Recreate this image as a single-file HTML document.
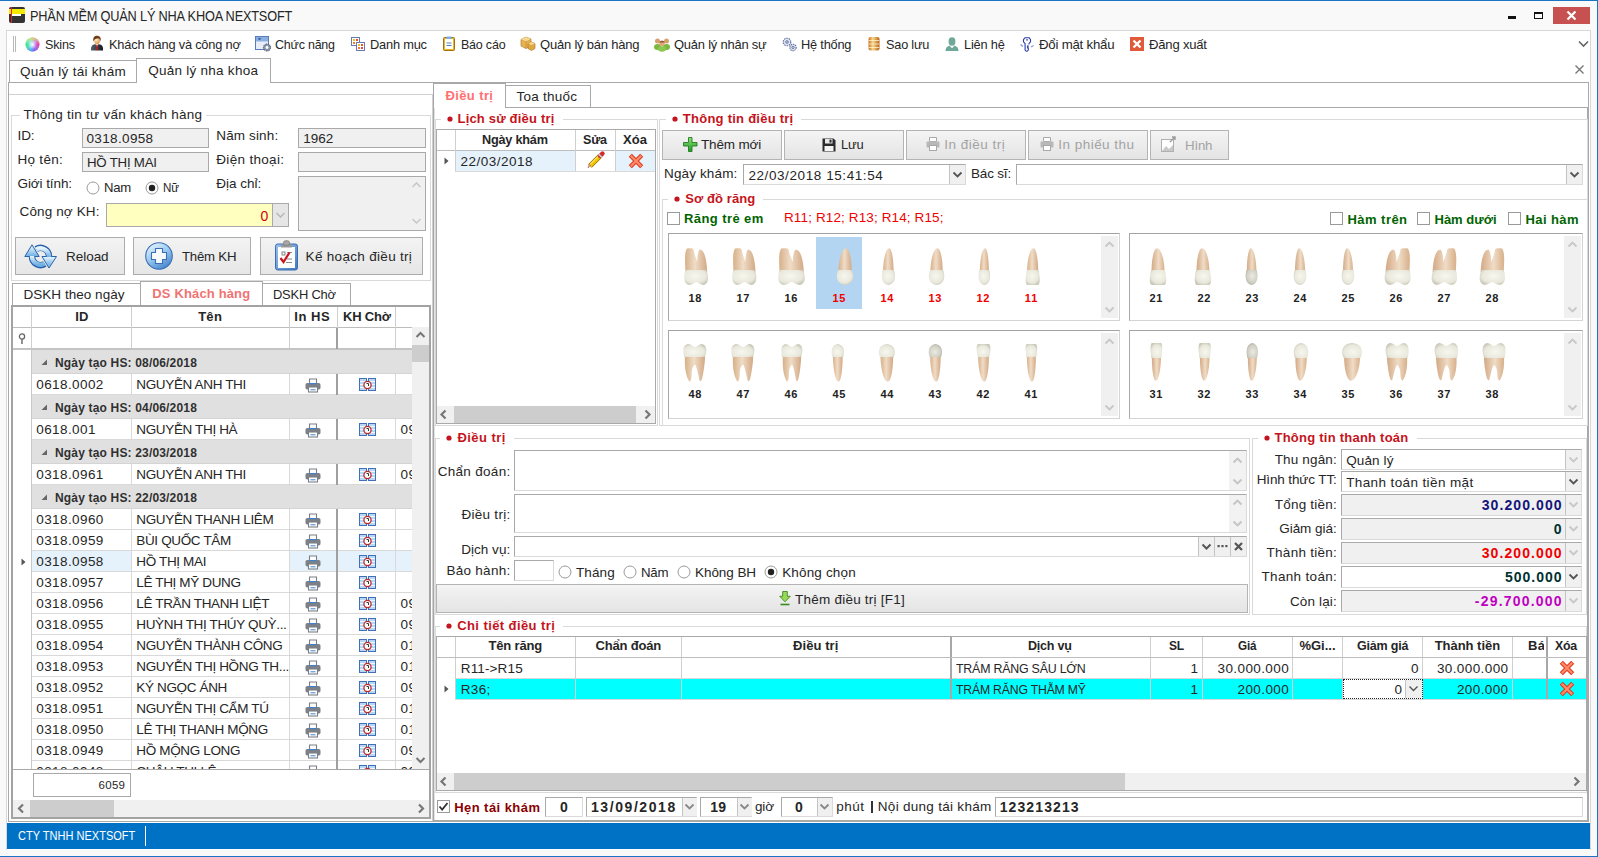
<!DOCTYPE html><html><head><meta charset="utf-8"><style>
*{margin:0;padding:0;box-sizing:border-box}
html,body{width:1598px;height:857px;overflow:hidden;background:#f9f9f9;font-family:"Liberation Sans",sans-serif;font-size:13px;color:#262626}
.a{position:absolute}
.t{position:absolute;white-space:pre}
svg{position:absolute;overflow:visible}
</style></head><body>
<div class="a" style="left:0px;top:0px;width:1598px;height:1px;background:#1c74c4"></div>
<div class="a" style="left:1597px;top:0px;width:1px;height:857px;background:#1c74c4"></div>
<div class="a" style="left:0px;top:856px;width:1598px;height:1px;background:#1c74c4"></div>
<svg style="left:9px;top:7px" width="16" height="16"><rect x="0" y="0" width="16" height="16" rx="2" fill="#333"/><rect x="0" y="2" width="16" height="5" fill="#f5ea00"/><rect x="3" y="7" width="9" height="2" fill="#fff"/><rect x="2" y="0" width="1" height="16" fill="#e22"/></svg>
<div class="t" style="left:29.50px;top:8.85px;font-size:14px;line-height:14px;color:#262626;letter-spacing:-0.200px;transform:scaleX(0.91);transform-origin:0 0;">PHẦN MỀM QUẢN LÝ NHA KHOA NEXTSOFT</div>
<div class="a" style="left:1508px;top:16px;width:8px;height:3px;background:#111"></div>
<div class="a" style="left:1534px;top:12px;width:9px;height:7px;border:1.5px solid #111;border-top-width:2px"></div>
<div class="a" style="left:1553px;top:7px;width:37px;height:17px;background:#c75050"></div>
<svg style="left:1566px;top:10px" width="11" height="11"><path d="M1.5 1.5 L9.5 9.5 M9.5 1.5 L1.5 9.5" stroke="#fff" stroke-width="2.2"/></svg>
<div class="a" style="left:6px;top:30px;width:1585px;height:820px;background:#fff;border:1px solid #d8d8d8;border-bottom:none"></div>
<div class="a" style="left:13px;top:36px;width:1px;height:16px;background:#b8b8b8"></div>
<div class="a" style="left:15px;top:36px;width:1px;height:16px;background:#b8b8b8"></div>
<div class="t" style="left:45.00px;top:37.57px;font-size:13.5px;line-height:13.5px;transform:scaleX(0.9335);transform-origin:0 0;letter-spacing:-0.220px;">Skins</div>
<div class="t" style="left:109.00px;top:37.57px;font-size:13.5px;line-height:13.5px;transform:scaleX(0.9494);transform-origin:0 0;letter-spacing:-0.220px;">Khách hàng và công nợ</div>
<div class="t" style="left:275.30px;top:37.57px;font-size:13.5px;line-height:13.5px;transform:scaleX(0.9221);transform-origin:0 0;letter-spacing:-0.220px;">Chức năng</div>
<div class="t" style="left:370.00px;top:37.57px;font-size:13.5px;line-height:13.5px;transform:scaleX(0.9501);transform-origin:0 0;letter-spacing:-0.220px;">Danh mục</div>
<div class="t" style="left:461.30px;top:37.57px;font-size:13.5px;line-height:13.5px;transform:scaleX(0.9248);transform-origin:0 0;letter-spacing:-0.220px;">Báo cáo</div>
<div class="t" style="left:540.20px;top:37.57px;font-size:13.5px;line-height:13.5px;transform:scaleX(0.9642);transform-origin:0 0;letter-spacing:-0.220px;">Quản lý bán hàng</div>
<div class="t" style="left:674.00px;top:37.57px;font-size:13.5px;line-height:13.5px;transform:scaleX(0.9578);transform-origin:0 0;letter-spacing:-0.220px;">Quản lý nhân sự</div>
<div class="t" style="left:801.30px;top:37.57px;font-size:13.5px;line-height:13.5px;transform:scaleX(0.9482);transform-origin:0 0;letter-spacing:-0.220px;">Hệ thống</div>
<div class="t" style="left:886.40px;top:37.57px;font-size:13.5px;line-height:13.5px;transform:scaleX(0.9411);transform-origin:0 0;letter-spacing:-0.220px;">Sao lưu</div>
<div class="t" style="left:964.00px;top:37.57px;font-size:13.5px;line-height:13.5px;transform:scaleX(0.9493);transform-origin:0 0;letter-spacing:-0.220px;">Liên hệ</div>
<div class="t" style="left:1039.00px;top:37.57px;font-size:13.5px;line-height:13.5px;transform:scaleX(0.9802);transform-origin:0 0;letter-spacing:-0.220px;">Đổi mật khẩu</div>
<div class="t" style="left:1149.20px;top:37.57px;font-size:13.5px;line-height:13.5px;transform:scaleX(0.9701);transform-origin:0 0;letter-spacing:-0.220px;">Đăng xuất</div>
<svg style="left:1578px;top:40px" width="11" height="8"><path d="M1 1.5 L5.5 6 L10 1.5" stroke="#666" stroke-width="1.6" fill="none"/></svg>
<div class="a" style="left:9px;top:60px;width:128px;height:23px;background:#fff;border:1px solid #a9a9a9;border-bottom:none"></div>
<div class="t" style="left:20.00px;top:64.57px;font-size:13.5px;line-height:13.5px;letter-spacing:0.294px;">Quản lý tái khám</div>
<div class="a" style="left:136px;top:58px;width:135px;height:25px;background:#fff;border:1px solid #a9a9a9;border-bottom:none"></div>
<div class="t" style="left:148.20px;top:63.57px;font-size:13.5px;line-height:13.5px;letter-spacing:0.261px;">Quản lý nha khoa</div>
<svg style="left:1575px;top:65px" width="9" height="9"><path d="M0.5 0.5 L8.5 8.5 M8.5 0.5 L0.5 8.5" stroke="#777" stroke-width="1.4"/></svg>
<div class="a" style="left:8px;top:82px;width:1581px;height:740px;background:#fff;border:1px solid #a9a9a9"></div>
<div class="a" style="left:137px;top:82px;width:133px;height:1px;background:#fff"></div>
<div class="a" style="left:7px;top:823px;width:1583px;height:26px;background:#0072c6"></div>
<div class="t" style="left:18.00px;top:829.84px;font-size:12px;line-height:12px;color:#fff;transform:scaleX(0.92);transform-origin:0 0;">CTY TNHH NEXTSOFT</div>
<div class="a" style="left:145px;top:826px;width:1px;height:20px;background:#fff"></div>
<div class="a" style="left:9px;top:94px;width:424px;height:727px;border-top:1px solid #d0d0d0;border-right:1px solid #d0d0d0"></div>
<div class="a" style="left:433px;top:82px;width:1px;height:740px;background:#a6a6a6"></div>
<div class="a" style="left:11px;top:115px;width:420px;height:166px;border:1px solid #d9d9d9"></div>
<div class="a" style="left:20px;top:110px;width:186px;height:10px;background:#fff"></div>
<div class="t" style="left:23.40px;top:107.57px;font-size:13.5px;line-height:13.5px;letter-spacing:0.263px;">Thông tin tư vấn khách hàng</div>
<div class="a" style="left:82px;top:128px;width:127px;height:20px;background:#f0f0f0;border:1px solid #a9a9a9"></div>
<div class="a" style="left:82px;top:152px;width:127px;height:20px;background:#f0f0f0;border:1px solid #a9a9a9"></div>
<div class="a" style="left:298px;top:128px;width:128px;height:20px;background:#f0f0f0;border:1px solid #a9a9a9"></div>
<div class="a" style="left:298px;top:152px;width:128px;height:20px;background:#f0f0f0;border:1px solid #a9a9a9"></div>
<div class="a" style="left:298px;top:176px;width:128px;height:55px;background:#f0f0f0;border:1px solid #a9a9a9"></div>
<div class="t" style="left:17.50px;top:128.57px;font-size:13.5px;line-height:13.5px;letter-spacing:-0.089px;">ID:</div>
<div class="t" style="left:86.50px;top:131.57px;font-size:13.5px;line-height:13.5px;letter-spacing:0.352px;">0318.0958</div>
<div class="t" style="left:17.50px;top:152.97px;font-size:13.5px;line-height:13.5px;letter-spacing:0.281px;">Họ tên:</div>
<div class="t" style="left:86.50px;top:155.57px;font-size:13.5px;line-height:13.5px;transform:scaleX(0.9820);transform-origin:0 0;letter-spacing:-0.220px;">HỒ THỊ MAI</div>
<div class="t" style="left:17.50px;top:177.07px;font-size:13.5px;line-height:13.5px;letter-spacing:-0.087px;">Giới tính:</div>
<div class="t" style="left:216.30px;top:128.77px;font-size:13.5px;line-height:13.5px;letter-spacing:0.135px;">Năm sinh:</div>
<div class="t" style="left:303.30px;top:131.97px;font-size:13.5px;line-height:13.5px;letter-spacing:-0.012px;">1962</div>
<div class="t" style="left:216.30px;top:152.97px;font-size:13.5px;line-height:13.5px;letter-spacing:0.314px;">Điện thoại:</div>
<div class="t" style="left:216.30px;top:176.97px;font-size:13.5px;line-height:13.5px;letter-spacing:-0.002px;">Địa chỉ:</div>
<svg style="left:412px;top:182px" width="9" height="6"><path d="M0.5 5 L4.5 1 L8.5 5" stroke="#c4c4c4" stroke-width="1.3" fill="none"/></svg>
<svg style="left:412px;top:218px" width="9" height="6"><path d="M0.5 1 L4.5 5 L8.5 1" stroke="#c4c4c4" stroke-width="1.3" fill="none"/></svg>
<svg style="left:86px;top:180.5px" width="14" height="14"><circle cx="7" cy="7" r="6" fill="#fff" stroke="#9a9a9a" stroke-width="1"/></svg>
<div class="t" style="left:104.30px;top:180.97px;font-size:13.5px;line-height:13.5px;transform:scaleX(0.9724);transform-origin:0 0;letter-spacing:-0.220px;">Nam</div>
<svg style="left:145px;top:180.5px" width="14" height="14"><circle cx="7" cy="7" r="6" fill="#fff" stroke="#9a9a9a" stroke-width="1"/><circle cx="7" cy="7" r="3.2" fill="#222"/></svg>
<div class="t" style="left:163.30px;top:180.97px;font-size:13.5px;line-height:13.5px;transform:scaleX(0.8613);transform-origin:0 0;letter-spacing:-0.220px;">Nữ</div>
<div class="t" style="left:19.60px;top:204.57px;font-size:13.5px;line-height:13.5px;letter-spacing:0.124px;">Công nợ KH:</div>
<div class="a" style="left:106px;top:203px;width:167px;height:24px;background:#ffffc0;border:1px solid #a9a9a9;border-right:none"></div>
<div class="a" style="left:272px;top:203px;width:17px;height:24px;background:#e6e6e6;border:1px solid #a9a9a9"></div>
<svg style="left:276px;top:212px" width="9" height="6"><path d="M0.5 1 L4.5 5 L8.5 1" stroke="#b5b5b5" stroke-width="1.3" fill="none"/></svg>
<div class="t" style="left:260.60px;top:208.65px;font-size:14px;line-height:14px;color:#d00000;">0</div>
<div class="a" style="left:15px;top:237px;width:110px;height:38px;background:linear-gradient(#f3f3f3,#e6e6e6);border:1px solid #acacac"></div>
<div class="a" style="left:133px;top:237px;width:118px;height:38px;background:linear-gradient(#f3f3f3,#e6e6e6);border:1px solid #acacac"></div>
<div class="a" style="left:260px;top:237px;width:163px;height:38px;background:linear-gradient(#f3f3f3,#e6e6e6);border:1px solid #acacac"></div>
<div class="t" style="left:66.00px;top:249.57px;font-size:13.5px;line-height:13.5px;letter-spacing:-0.030px;">Reload</div>
<div class="t" style="left:182.30px;top:249.57px;font-size:13.5px;line-height:13.5px;transform:scaleX(0.9785);transform-origin:0 0;letter-spacing:-0.220px;">Thêm KH</div>
<div class="t" style="left:305.60px;top:249.57px;font-size:13.5px;line-height:13.5px;letter-spacing:0.310px;">Kế hoạch điều trị</div>
<svg style="left:24px;top:244px" width="34" height="25" viewBox="0 0 34 25">
<defs><linearGradient id="rl" x1="0" y1="0" x2="0" y2="1"><stop offset="0" stop-color="#e4f4fd"/><stop offset="1" stop-color="#6fb0e4"/></linearGradient></defs>
<path d="M8 12.5 A8.5 8.5 0 0 0 20.8 19.9" stroke="#2c62aa" stroke-width="6.4" fill="none"/>
<path d="M12.2 5.1 A8.5 8.5 0 0 1 25 12.5" stroke="#2c62aa" stroke-width="6.4" fill="none"/>
<path d="M0.8 12.5 L8 0.8 L15.2 12.5 Z" fill="url(#rl)" stroke="#2c62aa" stroke-width="1"/>
<path d="M18 12.5 L25 24 L32.5 12.5 Z" fill="url(#rl)" stroke="#2c62aa" stroke-width="1"/>
<path d="M8 12 A8.5 8.5 0 0 0 20.6 19.6" stroke="url(#rl)" stroke-width="4.4" fill="none"/>
<path d="M12.4 5.4 A8.5 8.5 0 0 1 25 13" stroke="url(#rl)" stroke-width="4.4" fill="none"/>
<path d="M2.6 12 L8 3 L13.4 12 Z" fill="url(#rl)"/><path d="M19.8 13 L25 21.5 L30.7 13 Z" fill="url(#rl)"/>
</svg>
<svg style="left:145px;top:242px" width="28" height="28" viewBox="0 0 28 28">
<defs><linearGradient id="gb" x1="0.2" y1="0" x2="0.8" y2="1"><stop offset="0" stop-color="#eaf5fe"/><stop offset="0.45" stop-color="#9ccaf0"/><stop offset="1" stop-color="#3f7ec8"/></linearGradient></defs>
<circle cx="14" cy="14" r="13.3" fill="url(#gb)" stroke="#3a6fb6" stroke-width="1.1"/>
<path d="M10.5 6.5 h7 v4 h4 v7 h-4 v4 h-7 v-4 h-4 v-7 h4 z" fill="#f6fafe" stroke="#3a6fb6" stroke-width="1.1" stroke-linejoin="round"/>
</svg>
<svg style="left:275px;top:240px" width="23" height="31" viewBox="0 0 23 31">
<defs><linearGradient id="cb" x1="0" y1="0" x2="1" y2="1"><stop offset="0" stop-color="#9cc4ee"/><stop offset="1" stop-color="#3f78c0"/></linearGradient></defs>
<rect x="0.5" y="4" width="22" height="26" rx="2.2" fill="url(#cb)" stroke="#3b6db0" stroke-width="1"/>
<rect x="3" y="7" width="17" height="21" fill="#fff"/>
<path d="M6 4.5 h11 v3 h-11 z" fill="#9a9a9a"/><rect x="8.5" y="0.8" width="6" height="4.5" rx="2" fill="#a8a8a8" stroke="#7a7a7a" stroke-width="0.8"/>
<rect x="7" y="12" width="3" height="3" fill="none" stroke="#777" stroke-width="0.9"/>
<path d="M12 12.5 h5 M12 19 h5 M11 22.5 h6" stroke="#888" stroke-width="1"/>
<path d="M5.5 18 L8.5 22 L14.5 12.5" stroke="#c8141e" stroke-width="2.2" fill="none"/>
</svg>
<div class="a" style="left:12px;top:283px;width:129px;height:23px;background:#fff;border:1px solid #a9a9a9;border-bottom:none"></div>
<div class="a" style="left:262px;top:283px;width:89px;height:23px;background:#fff;border:1px solid #a9a9a9;border-bottom:none"></div>
<div class="a" style="left:140px;top:281px;width:123px;height:25px;background:#fff;border:1px solid #a9a9a9;border-bottom:none"></div>
<div class="t" style="left:23.50px;top:287.57px;font-size:13.5px;line-height:13.5px;letter-spacing:0.031px;">DSKH theo ngày</div>
<div class="t" style="left:152.30px;top:286.50px;font-size:13px;line-height:13px;font-weight:700;color:#f07373;letter-spacing:0.148px;">DS Khách hàng</div>
<div class="t" style="left:272.60px;top:287.57px;font-size:13.5px;line-height:13.5px;transform:scaleX(0.9569);transform-origin:0 0;letter-spacing:-0.220px;">DSKH Chờ</div>
<div class="a" style="left:11px;top:305px;width:420px;height:514px;border:2px solid #a3a3a3;background:#fff"></div>
<div class="a" style="left:13px;top:307px;width:399px;height:21px;background:#fff;border-bottom:1px solid #bdbdbd"></div>
<div class="a" style="left:412px;top:307px;width:17px;height:21px;background:#fff;border-bottom:1px solid #bdbdbd"></div>
<div class="a" style="left:31px;top:307px;width:1px;height:42px;background:#cfcfcf"></div>
<div class="a" style="left:131px;top:307px;width:1px;height:42px;background:#cfcfcf"></div>
<div class="a" style="left:289px;top:307px;width:1px;height:42px;background:#cfcfcf"></div>
<div class="a" style="left:337px;top:307px;width:1px;height:42px;background:#cfcfcf"></div>
<div class="a" style="left:395px;top:307px;width:1px;height:42px;background:#cfcfcf"></div>
<div class="t" style="left:75.30px;top:309.60px;font-size:13px;line-height:13px;font-weight:700;letter-spacing:0.200px;">ID</div>
<div class="t" style="left:198.15px;top:309.60px;font-size:13px;line-height:13px;font-weight:700;letter-spacing:0.292px;">Tên</div>
<div class="t" style="left:294.28px;top:309.60px;font-size:13px;line-height:13px;font-weight:700;letter-spacing:0.553px;">In HS</div>
<div class="t" style="left:343.04px;top:309.60px;font-size:13px;line-height:13px;font-weight:700;letter-spacing:-0.211px;">KH Chờ</div>
<div class="a" style="left:13px;top:348px;width:399px;height:2px;background:#c4c4c4"></div>
<svg style="left:18px;top:333px" width="8" height="12"><circle cx="4" cy="3.5" r="2.6" fill="none" stroke="#666" stroke-width="1.3"/><path d="M4 6 V11" stroke="#666" stroke-width="1.4"/></svg>
<div class="a" style="left:412px;top:327px;width:17px;height:442px;background:#f0f0f0"></div>
<div class="a" style="left:412px;top:345px;width:17px;height:17px;background:#cdcdcd"></div>
<svg style="left:416px;top:332px" width="9" height="6"><path d="M0.5 5 L4.5 1 L8.5 5" stroke="#777" stroke-width="2" fill="none"/></svg>
<svg style="left:416px;top:757px" width="9" height="6"><path d="M0.5 1 L4.5 5 L8.5 1" stroke="#777" stroke-width="2" fill="none"/></svg>
<div class="a" style="left:14px;top:350px;width:398px;height:419px;overflow:hidden">
<div class="a" style="left:17px;top:0px;width:381px;height:24px;background:#e0e0e0;border-bottom:1px solid #d4d4d4"></div>
<svg style="left:27px;top:9px" width="7" height="7"><path d="M6 0.5 V6 H0.5 Z" fill="#666"/></svg>
<div class="t" style="left:41.00px;top:6.54px;font-size:12px;line-height:12px;font-weight:700;color:#303030;letter-spacing:0.171px;">Ngày tạo HS: 08/06/2018</div>
<div class="a" style="left:17px;top:24px;width:381px;height:21px;background:#fff;border-bottom:1px solid #d9d9d9"></div>
<div class="a" style="left:117px;top:24px;width:1px;height:21px;background:#d9d9d9"></div>
<div class="a" style="left:275px;top:24px;width:1px;height:21px;background:#d9d9d9"></div>
<div class="a" style="left:381px;top:24px;width:1px;height:21px;background:#d9d9d9"></div>
<div class="a" style="left:322px;top:24px;width:2px;height:21px;background:#a0a0a0"></div>
<div class="t" style="left:22.30px;top:28.27px;font-size:13.5px;line-height:13.5px;letter-spacing:0.400px;">0618.0002</div>
<div class="t" style="left:122.30px;top:28.27px;font-size:13.5px;line-height:13.5px;letter-spacing:-0.350px;">NGUYỄN ANH THI</div>
<svg style="left:291px;top:28px" width="16" height="14"><path d="M4.5 1 h7 v4.5 h-7 z" fill="#fff" stroke="#7a7f86" stroke-width="1.1"/><rect x="0.5" y="5" width="15" height="6.5" rx="1.8" fill="#7d8186"/><rect x="4.5" y="5" width="7" height="1.2" fill="#3f7fd0"/><rect x="3.5" y="9" width="9" height="5" fill="#fff" stroke="#7a7f86" stroke-width="1.1"/><path d="M5.5 11.8 h5" stroke="#3f7fd0" stroke-width="1"/></svg>
<svg style="left:345px;top:28px" width="17" height="13"><rect x="0.5" y="0.5" width="7" height="12" fill="#b9d6f2" stroke="#3f70b8"/><rect x="9.5" y="0.5" width="7" height="12" fill="#b9d6f2" stroke="#3f70b8"/><path d="M1 3.5 h6 M1 6.5 h6 M1 9.5 h6 M10 3.5 h6 M10 6.5 h6 M10 9.5 h6" stroke="#fff" stroke-width="0.8"/><circle cx="8.5" cy="7" r="3.6" fill="#fff" stroke="#c02828" stroke-width="1.3"/><path d="M7.5 5.5 h2 v2.5" stroke="#333" stroke-width="1" fill="none"/></svg>
<div class="a" style="left:17px;top:45px;width:381px;height:24px;background:#e0e0e0;border-bottom:1px solid #d4d4d4"></div>
<svg style="left:27px;top:54px" width="7" height="7"><path d="M6 0.5 V6 H0.5 Z" fill="#666"/></svg>
<div class="t" style="left:41.00px;top:51.54px;font-size:12px;line-height:12px;font-weight:700;color:#303030;letter-spacing:0.171px;">Ngày tạo HS: 04/06/2018</div>
<div class="a" style="left:17px;top:69px;width:381px;height:21px;background:#fff;border-bottom:1px solid #d9d9d9"></div>
<div class="a" style="left:117px;top:69px;width:1px;height:21px;background:#d9d9d9"></div>
<div class="a" style="left:275px;top:69px;width:1px;height:21px;background:#d9d9d9"></div>
<div class="a" style="left:381px;top:69px;width:1px;height:21px;background:#d9d9d9"></div>
<div class="a" style="left:322px;top:69px;width:2px;height:21px;background:#a0a0a0"></div>
<div class="t" style="left:22.30px;top:73.27px;font-size:13.5px;line-height:13.5px;letter-spacing:0.400px;">0618.001</div>
<div class="t" style="left:122.30px;top:73.27px;font-size:13.5px;line-height:13.5px;letter-spacing:-0.350px;">NGUYỄN THỊ HÀ</div>
<svg style="left:291px;top:73px" width="16" height="14"><path d="M4.5 1 h7 v4.5 h-7 z" fill="#fff" stroke="#7a7f86" stroke-width="1.1"/><rect x="0.5" y="5" width="15" height="6.5" rx="1.8" fill="#7d8186"/><rect x="4.5" y="5" width="7" height="1.2" fill="#3f7fd0"/><rect x="3.5" y="9" width="9" height="5" fill="#fff" stroke="#7a7f86" stroke-width="1.1"/><path d="M5.5 11.8 h5" stroke="#3f7fd0" stroke-width="1"/></svg>
<svg style="left:345px;top:73px" width="17" height="13"><rect x="0.5" y="0.5" width="7" height="12" fill="#b9d6f2" stroke="#3f70b8"/><rect x="9.5" y="0.5" width="7" height="12" fill="#b9d6f2" stroke="#3f70b8"/><path d="M1 3.5 h6 M1 6.5 h6 M1 9.5 h6 M10 3.5 h6 M10 6.5 h6 M10 9.5 h6" stroke="#fff" stroke-width="0.8"/><circle cx="8.5" cy="7" r="3.6" fill="#fff" stroke="#c02828" stroke-width="1.3"/><path d="M7.5 5.5 h2 v2.5" stroke="#333" stroke-width="1" fill="none"/></svg>
<div class="t" style="left:386.60px;top:73.27px;font-size:13.5px;line-height:13.5px;letter-spacing:0.400px;">09</div>
<div class="a" style="left:17px;top:90px;width:381px;height:24px;background:#e0e0e0;border-bottom:1px solid #d4d4d4"></div>
<svg style="left:27px;top:99px" width="7" height="7"><path d="M6 0.5 V6 H0.5 Z" fill="#666"/></svg>
<div class="t" style="left:41.00px;top:96.54px;font-size:12px;line-height:12px;font-weight:700;color:#303030;letter-spacing:0.171px;">Ngày tạo HS: 23/03/2018</div>
<div class="a" style="left:17px;top:114px;width:381px;height:21px;background:#fff;border-bottom:1px solid #d9d9d9"></div>
<div class="a" style="left:117px;top:114px;width:1px;height:21px;background:#d9d9d9"></div>
<div class="a" style="left:275px;top:114px;width:1px;height:21px;background:#d9d9d9"></div>
<div class="a" style="left:381px;top:114px;width:1px;height:21px;background:#d9d9d9"></div>
<div class="a" style="left:322px;top:114px;width:2px;height:21px;background:#a0a0a0"></div>
<div class="t" style="left:22.30px;top:118.27px;font-size:13.5px;line-height:13.5px;letter-spacing:0.400px;">0318.0961</div>
<div class="t" style="left:122.30px;top:118.27px;font-size:13.5px;line-height:13.5px;letter-spacing:-0.350px;">NGUYỄN ANH THI</div>
<svg style="left:291px;top:118px" width="16" height="14"><path d="M4.5 1 h7 v4.5 h-7 z" fill="#fff" stroke="#7a7f86" stroke-width="1.1"/><rect x="0.5" y="5" width="15" height="6.5" rx="1.8" fill="#7d8186"/><rect x="4.5" y="5" width="7" height="1.2" fill="#3f7fd0"/><rect x="3.5" y="9" width="9" height="5" fill="#fff" stroke="#7a7f86" stroke-width="1.1"/><path d="M5.5 11.8 h5" stroke="#3f7fd0" stroke-width="1"/></svg>
<svg style="left:345px;top:118px" width="17" height="13"><rect x="0.5" y="0.5" width="7" height="12" fill="#b9d6f2" stroke="#3f70b8"/><rect x="9.5" y="0.5" width="7" height="12" fill="#b9d6f2" stroke="#3f70b8"/><path d="M1 3.5 h6 M1 6.5 h6 M1 9.5 h6 M10 3.5 h6 M10 6.5 h6 M10 9.5 h6" stroke="#fff" stroke-width="0.8"/><circle cx="8.5" cy="7" r="3.6" fill="#fff" stroke="#c02828" stroke-width="1.3"/><path d="M7.5 5.5 h2 v2.5" stroke="#333" stroke-width="1" fill="none"/></svg>
<div class="t" style="left:386.60px;top:118.27px;font-size:13.5px;line-height:13.5px;letter-spacing:0.400px;">09</div>
<div class="a" style="left:17px;top:135px;width:381px;height:24px;background:#e0e0e0;border-bottom:1px solid #d4d4d4"></div>
<svg style="left:27px;top:144px" width="7" height="7"><path d="M6 0.5 V6 H0.5 Z" fill="#666"/></svg>
<div class="t" style="left:41.00px;top:141.54px;font-size:12px;line-height:12px;font-weight:700;color:#303030;letter-spacing:0.171px;">Ngày tạo HS: 22/03/2018</div>
<div class="a" style="left:17px;top:159px;width:381px;height:21px;background:#fff;border-bottom:1px solid #d9d9d9"></div>
<div class="a" style="left:117px;top:159px;width:1px;height:21px;background:#d9d9d9"></div>
<div class="a" style="left:275px;top:159px;width:1px;height:21px;background:#d9d9d9"></div>
<div class="a" style="left:381px;top:159px;width:1px;height:21px;background:#d9d9d9"></div>
<div class="a" style="left:322px;top:159px;width:2px;height:21px;background:#a0a0a0"></div>
<div class="t" style="left:22.30px;top:163.27px;font-size:13.5px;line-height:13.5px;letter-spacing:0.400px;">0318.0960</div>
<div class="t" style="left:122.30px;top:163.27px;font-size:13.5px;line-height:13.5px;letter-spacing:-0.350px;">NGUYỄN THANH LIÊM</div>
<svg style="left:291px;top:163px" width="16" height="14"><path d="M4.5 1 h7 v4.5 h-7 z" fill="#fff" stroke="#7a7f86" stroke-width="1.1"/><rect x="0.5" y="5" width="15" height="6.5" rx="1.8" fill="#7d8186"/><rect x="4.5" y="5" width="7" height="1.2" fill="#3f7fd0"/><rect x="3.5" y="9" width="9" height="5" fill="#fff" stroke="#7a7f86" stroke-width="1.1"/><path d="M5.5 11.8 h5" stroke="#3f7fd0" stroke-width="1"/></svg>
<svg style="left:345px;top:163px" width="17" height="13"><rect x="0.5" y="0.5" width="7" height="12" fill="#b9d6f2" stroke="#3f70b8"/><rect x="9.5" y="0.5" width="7" height="12" fill="#b9d6f2" stroke="#3f70b8"/><path d="M1 3.5 h6 M1 6.5 h6 M1 9.5 h6 M10 3.5 h6 M10 6.5 h6 M10 9.5 h6" stroke="#fff" stroke-width="0.8"/><circle cx="8.5" cy="7" r="3.6" fill="#fff" stroke="#c02828" stroke-width="1.3"/><path d="M7.5 5.5 h2 v2.5" stroke="#333" stroke-width="1" fill="none"/></svg>
<div class="a" style="left:17px;top:180px;width:381px;height:21px;background:#fff;border-bottom:1px solid #d9d9d9"></div>
<div class="a" style="left:117px;top:180px;width:1px;height:21px;background:#d9d9d9"></div>
<div class="a" style="left:275px;top:180px;width:1px;height:21px;background:#d9d9d9"></div>
<div class="a" style="left:381px;top:180px;width:1px;height:21px;background:#d9d9d9"></div>
<div class="a" style="left:322px;top:180px;width:2px;height:21px;background:#a0a0a0"></div>
<div class="t" style="left:22.30px;top:184.27px;font-size:13.5px;line-height:13.5px;letter-spacing:0.400px;">0318.0959</div>
<div class="t" style="left:122.30px;top:184.27px;font-size:13.5px;line-height:13.5px;letter-spacing:-0.350px;">BÙI QUỐC TÂM</div>
<svg style="left:291px;top:184px" width="16" height="14"><path d="M4.5 1 h7 v4.5 h-7 z" fill="#fff" stroke="#7a7f86" stroke-width="1.1"/><rect x="0.5" y="5" width="15" height="6.5" rx="1.8" fill="#7d8186"/><rect x="4.5" y="5" width="7" height="1.2" fill="#3f7fd0"/><rect x="3.5" y="9" width="9" height="5" fill="#fff" stroke="#7a7f86" stroke-width="1.1"/><path d="M5.5 11.8 h5" stroke="#3f7fd0" stroke-width="1"/></svg>
<svg style="left:345px;top:184px" width="17" height="13"><rect x="0.5" y="0.5" width="7" height="12" fill="#b9d6f2" stroke="#3f70b8"/><rect x="9.5" y="0.5" width="7" height="12" fill="#b9d6f2" stroke="#3f70b8"/><path d="M1 3.5 h6 M1 6.5 h6 M1 9.5 h6 M10 3.5 h6 M10 6.5 h6 M10 9.5 h6" stroke="#fff" stroke-width="0.8"/><circle cx="8.5" cy="7" r="3.6" fill="#fff" stroke="#c02828" stroke-width="1.3"/><path d="M7.5 5.5 h2 v2.5" stroke="#333" stroke-width="1" fill="none"/></svg>
<div class="a" style="left:17px;top:201px;width:381px;height:21px;background:#e5f1fb;border-bottom:1px solid #d9d9d9"></div>
<div class="a" style="left:118px;top:201px;width:157px;height:20px;background:#fff"></div>
<div class="a" style="left:117px;top:201px;width:1px;height:21px;background:#d9d9d9"></div>
<div class="a" style="left:275px;top:201px;width:1px;height:21px;background:#d9d9d9"></div>
<div class="a" style="left:381px;top:201px;width:1px;height:21px;background:#d9d9d9"></div>
<div class="a" style="left:322px;top:201px;width:2px;height:21px;background:#a0a0a0"></div>
<div class="t" style="left:22.30px;top:205.27px;font-size:13.5px;line-height:13.5px;letter-spacing:0.400px;">0318.0958</div>
<div class="t" style="left:122.30px;top:205.27px;font-size:13.5px;line-height:13.5px;letter-spacing:-0.350px;">HỒ THỊ MAI</div>
<svg style="left:291px;top:205px" width="16" height="14"><path d="M4.5 1 h7 v4.5 h-7 z" fill="#fff" stroke="#7a7f86" stroke-width="1.1"/><rect x="0.5" y="5" width="15" height="6.5" rx="1.8" fill="#7d8186"/><rect x="4.5" y="5" width="7" height="1.2" fill="#3f7fd0"/><rect x="3.5" y="9" width="9" height="5" fill="#fff" stroke="#7a7f86" stroke-width="1.1"/><path d="M5.5 11.8 h5" stroke="#3f7fd0" stroke-width="1"/></svg>
<svg style="left:345px;top:205px" width="17" height="13"><rect x="0.5" y="0.5" width="7" height="12" fill="#b9d6f2" stroke="#3f70b8"/><rect x="9.5" y="0.5" width="7" height="12" fill="#b9d6f2" stroke="#3f70b8"/><path d="M1 3.5 h6 M1 6.5 h6 M1 9.5 h6 M10 3.5 h6 M10 6.5 h6 M10 9.5 h6" stroke="#fff" stroke-width="0.8"/><circle cx="8.5" cy="7" r="3.6" fill="#fff" stroke="#c02828" stroke-width="1.3"/><path d="M7.5 5.5 h2 v2.5" stroke="#333" stroke-width="1" fill="none"/></svg>
<svg style="left:7px;top:208px" width="5" height="8"><path d="M0.5 0.5 L4.5 4 L0.5 7.5 Z" fill="#555"/></svg>
<div class="a" style="left:17px;top:222px;width:381px;height:21px;background:#fff;border-bottom:1px solid #d9d9d9"></div>
<div class="a" style="left:117px;top:222px;width:1px;height:21px;background:#d9d9d9"></div>
<div class="a" style="left:275px;top:222px;width:1px;height:21px;background:#d9d9d9"></div>
<div class="a" style="left:381px;top:222px;width:1px;height:21px;background:#d9d9d9"></div>
<div class="a" style="left:322px;top:222px;width:2px;height:21px;background:#a0a0a0"></div>
<div class="t" style="left:22.30px;top:226.27px;font-size:13.5px;line-height:13.5px;letter-spacing:0.400px;">0318.0957</div>
<div class="t" style="left:122.30px;top:226.27px;font-size:13.5px;line-height:13.5px;letter-spacing:-0.350px;">LÊ THỊ MỸ DUNG</div>
<svg style="left:291px;top:226px" width="16" height="14"><path d="M4.5 1 h7 v4.5 h-7 z" fill="#fff" stroke="#7a7f86" stroke-width="1.1"/><rect x="0.5" y="5" width="15" height="6.5" rx="1.8" fill="#7d8186"/><rect x="4.5" y="5" width="7" height="1.2" fill="#3f7fd0"/><rect x="3.5" y="9" width="9" height="5" fill="#fff" stroke="#7a7f86" stroke-width="1.1"/><path d="M5.5 11.8 h5" stroke="#3f7fd0" stroke-width="1"/></svg>
<svg style="left:345px;top:226px" width="17" height="13"><rect x="0.5" y="0.5" width="7" height="12" fill="#b9d6f2" stroke="#3f70b8"/><rect x="9.5" y="0.5" width="7" height="12" fill="#b9d6f2" stroke="#3f70b8"/><path d="M1 3.5 h6 M1 6.5 h6 M1 9.5 h6 M10 3.5 h6 M10 6.5 h6 M10 9.5 h6" stroke="#fff" stroke-width="0.8"/><circle cx="8.5" cy="7" r="3.6" fill="#fff" stroke="#c02828" stroke-width="1.3"/><path d="M7.5 5.5 h2 v2.5" stroke="#333" stroke-width="1" fill="none"/></svg>
<div class="a" style="left:17px;top:243px;width:381px;height:21px;background:#fff;border-bottom:1px solid #d9d9d9"></div>
<div class="a" style="left:117px;top:243px;width:1px;height:21px;background:#d9d9d9"></div>
<div class="a" style="left:275px;top:243px;width:1px;height:21px;background:#d9d9d9"></div>
<div class="a" style="left:381px;top:243px;width:1px;height:21px;background:#d9d9d9"></div>
<div class="a" style="left:322px;top:243px;width:2px;height:21px;background:#a0a0a0"></div>
<div class="t" style="left:22.30px;top:247.27px;font-size:13.5px;line-height:13.5px;letter-spacing:0.400px;">0318.0956</div>
<div class="t" style="left:122.30px;top:247.27px;font-size:13.5px;line-height:13.5px;letter-spacing:-0.350px;">LÊ TRẦN THANH LIỆT</div>
<svg style="left:291px;top:247px" width="16" height="14"><path d="M4.5 1 h7 v4.5 h-7 z" fill="#fff" stroke="#7a7f86" stroke-width="1.1"/><rect x="0.5" y="5" width="15" height="6.5" rx="1.8" fill="#7d8186"/><rect x="4.5" y="5" width="7" height="1.2" fill="#3f7fd0"/><rect x="3.5" y="9" width="9" height="5" fill="#fff" stroke="#7a7f86" stroke-width="1.1"/><path d="M5.5 11.8 h5" stroke="#3f7fd0" stroke-width="1"/></svg>
<svg style="left:345px;top:247px" width="17" height="13"><rect x="0.5" y="0.5" width="7" height="12" fill="#b9d6f2" stroke="#3f70b8"/><rect x="9.5" y="0.5" width="7" height="12" fill="#b9d6f2" stroke="#3f70b8"/><path d="M1 3.5 h6 M1 6.5 h6 M1 9.5 h6 M10 3.5 h6 M10 6.5 h6 M10 9.5 h6" stroke="#fff" stroke-width="0.8"/><circle cx="8.5" cy="7" r="3.6" fill="#fff" stroke="#c02828" stroke-width="1.3"/><path d="M7.5 5.5 h2 v2.5" stroke="#333" stroke-width="1" fill="none"/></svg>
<div class="t" style="left:386.60px;top:247.27px;font-size:13.5px;line-height:13.5px;letter-spacing:0.400px;">09</div>
<div class="a" style="left:17px;top:264px;width:381px;height:21px;background:#fff;border-bottom:1px solid #d9d9d9"></div>
<div class="a" style="left:117px;top:264px;width:1px;height:21px;background:#d9d9d9"></div>
<div class="a" style="left:275px;top:264px;width:1px;height:21px;background:#d9d9d9"></div>
<div class="a" style="left:381px;top:264px;width:1px;height:21px;background:#d9d9d9"></div>
<div class="a" style="left:322px;top:264px;width:2px;height:21px;background:#a0a0a0"></div>
<div class="t" style="left:22.30px;top:268.27px;font-size:13.5px;line-height:13.5px;letter-spacing:0.400px;">0318.0955</div>
<div class="t" style="left:122.30px;top:268.27px;font-size:13.5px;line-height:13.5px;letter-spacing:-0.350px;">HUỲNH THỊ THÚY QUỲ...</div>
<svg style="left:291px;top:268px" width="16" height="14"><path d="M4.5 1 h7 v4.5 h-7 z" fill="#fff" stroke="#7a7f86" stroke-width="1.1"/><rect x="0.5" y="5" width="15" height="6.5" rx="1.8" fill="#7d8186"/><rect x="4.5" y="5" width="7" height="1.2" fill="#3f7fd0"/><rect x="3.5" y="9" width="9" height="5" fill="#fff" stroke="#7a7f86" stroke-width="1.1"/><path d="M5.5 11.8 h5" stroke="#3f7fd0" stroke-width="1"/></svg>
<svg style="left:345px;top:268px" width="17" height="13"><rect x="0.5" y="0.5" width="7" height="12" fill="#b9d6f2" stroke="#3f70b8"/><rect x="9.5" y="0.5" width="7" height="12" fill="#b9d6f2" stroke="#3f70b8"/><path d="M1 3.5 h6 M1 6.5 h6 M1 9.5 h6 M10 3.5 h6 M10 6.5 h6 M10 9.5 h6" stroke="#fff" stroke-width="0.8"/><circle cx="8.5" cy="7" r="3.6" fill="#fff" stroke="#c02828" stroke-width="1.3"/><path d="M7.5 5.5 h2 v2.5" stroke="#333" stroke-width="1" fill="none"/></svg>
<div class="t" style="left:386.60px;top:268.27px;font-size:13.5px;line-height:13.5px;letter-spacing:0.400px;">09</div>
<div class="a" style="left:17px;top:285px;width:381px;height:21px;background:#fff;border-bottom:1px solid #d9d9d9"></div>
<div class="a" style="left:117px;top:285px;width:1px;height:21px;background:#d9d9d9"></div>
<div class="a" style="left:275px;top:285px;width:1px;height:21px;background:#d9d9d9"></div>
<div class="a" style="left:381px;top:285px;width:1px;height:21px;background:#d9d9d9"></div>
<div class="a" style="left:322px;top:285px;width:2px;height:21px;background:#a0a0a0"></div>
<div class="t" style="left:22.30px;top:289.27px;font-size:13.5px;line-height:13.5px;letter-spacing:0.400px;">0318.0954</div>
<div class="t" style="left:122.30px;top:289.27px;font-size:13.5px;line-height:13.5px;letter-spacing:-0.350px;">NGUYỄN THÀNH CÔNG</div>
<svg style="left:291px;top:289px" width="16" height="14"><path d="M4.5 1 h7 v4.5 h-7 z" fill="#fff" stroke="#7a7f86" stroke-width="1.1"/><rect x="0.5" y="5" width="15" height="6.5" rx="1.8" fill="#7d8186"/><rect x="4.5" y="5" width="7" height="1.2" fill="#3f7fd0"/><rect x="3.5" y="9" width="9" height="5" fill="#fff" stroke="#7a7f86" stroke-width="1.1"/><path d="M5.5 11.8 h5" stroke="#3f7fd0" stroke-width="1"/></svg>
<svg style="left:345px;top:289px" width="17" height="13"><rect x="0.5" y="0.5" width="7" height="12" fill="#b9d6f2" stroke="#3f70b8"/><rect x="9.5" y="0.5" width="7" height="12" fill="#b9d6f2" stroke="#3f70b8"/><path d="M1 3.5 h6 M1 6.5 h6 M1 9.5 h6 M10 3.5 h6 M10 6.5 h6 M10 9.5 h6" stroke="#fff" stroke-width="0.8"/><circle cx="8.5" cy="7" r="3.6" fill="#fff" stroke="#c02828" stroke-width="1.3"/><path d="M7.5 5.5 h2 v2.5" stroke="#333" stroke-width="1" fill="none"/></svg>
<div class="t" style="left:386.60px;top:289.27px;font-size:13.5px;line-height:13.5px;letter-spacing:0.400px;">01</div>
<div class="a" style="left:17px;top:306px;width:381px;height:21px;background:#fff;border-bottom:1px solid #d9d9d9"></div>
<div class="a" style="left:117px;top:306px;width:1px;height:21px;background:#d9d9d9"></div>
<div class="a" style="left:275px;top:306px;width:1px;height:21px;background:#d9d9d9"></div>
<div class="a" style="left:381px;top:306px;width:1px;height:21px;background:#d9d9d9"></div>
<div class="a" style="left:322px;top:306px;width:2px;height:21px;background:#a0a0a0"></div>
<div class="t" style="left:22.30px;top:310.27px;font-size:13.5px;line-height:13.5px;letter-spacing:0.400px;">0318.0953</div>
<div class="t" style="left:122.30px;top:310.27px;font-size:13.5px;line-height:13.5px;letter-spacing:-0.350px;">NGUYỄN THỊ HỒNG TH...</div>
<svg style="left:291px;top:310px" width="16" height="14"><path d="M4.5 1 h7 v4.5 h-7 z" fill="#fff" stroke="#7a7f86" stroke-width="1.1"/><rect x="0.5" y="5" width="15" height="6.5" rx="1.8" fill="#7d8186"/><rect x="4.5" y="5" width="7" height="1.2" fill="#3f7fd0"/><rect x="3.5" y="9" width="9" height="5" fill="#fff" stroke="#7a7f86" stroke-width="1.1"/><path d="M5.5 11.8 h5" stroke="#3f7fd0" stroke-width="1"/></svg>
<svg style="left:345px;top:310px" width="17" height="13"><rect x="0.5" y="0.5" width="7" height="12" fill="#b9d6f2" stroke="#3f70b8"/><rect x="9.5" y="0.5" width="7" height="12" fill="#b9d6f2" stroke="#3f70b8"/><path d="M1 3.5 h6 M1 6.5 h6 M1 9.5 h6 M10 3.5 h6 M10 6.5 h6 M10 9.5 h6" stroke="#fff" stroke-width="0.8"/><circle cx="8.5" cy="7" r="3.6" fill="#fff" stroke="#c02828" stroke-width="1.3"/><path d="M7.5 5.5 h2 v2.5" stroke="#333" stroke-width="1" fill="none"/></svg>
<div class="t" style="left:386.60px;top:310.27px;font-size:13.5px;line-height:13.5px;letter-spacing:0.400px;">01</div>
<div class="a" style="left:17px;top:327px;width:381px;height:21px;background:#fff;border-bottom:1px solid #d9d9d9"></div>
<div class="a" style="left:117px;top:327px;width:1px;height:21px;background:#d9d9d9"></div>
<div class="a" style="left:275px;top:327px;width:1px;height:21px;background:#d9d9d9"></div>
<div class="a" style="left:381px;top:327px;width:1px;height:21px;background:#d9d9d9"></div>
<div class="a" style="left:322px;top:327px;width:2px;height:21px;background:#a0a0a0"></div>
<div class="t" style="left:22.30px;top:331.27px;font-size:13.5px;line-height:13.5px;letter-spacing:0.400px;">0318.0952</div>
<div class="t" style="left:122.30px;top:331.27px;font-size:13.5px;line-height:13.5px;letter-spacing:-0.350px;">KÝ NGỌC ÁNH</div>
<svg style="left:291px;top:331px" width="16" height="14"><path d="M4.5 1 h7 v4.5 h-7 z" fill="#fff" stroke="#7a7f86" stroke-width="1.1"/><rect x="0.5" y="5" width="15" height="6.5" rx="1.8" fill="#7d8186"/><rect x="4.5" y="5" width="7" height="1.2" fill="#3f7fd0"/><rect x="3.5" y="9" width="9" height="5" fill="#fff" stroke="#7a7f86" stroke-width="1.1"/><path d="M5.5 11.8 h5" stroke="#3f7fd0" stroke-width="1"/></svg>
<svg style="left:345px;top:331px" width="17" height="13"><rect x="0.5" y="0.5" width="7" height="12" fill="#b9d6f2" stroke="#3f70b8"/><rect x="9.5" y="0.5" width="7" height="12" fill="#b9d6f2" stroke="#3f70b8"/><path d="M1 3.5 h6 M1 6.5 h6 M1 9.5 h6 M10 3.5 h6 M10 6.5 h6 M10 9.5 h6" stroke="#fff" stroke-width="0.8"/><circle cx="8.5" cy="7" r="3.6" fill="#fff" stroke="#c02828" stroke-width="1.3"/><path d="M7.5 5.5 h2 v2.5" stroke="#333" stroke-width="1" fill="none"/></svg>
<div class="t" style="left:386.60px;top:331.27px;font-size:13.5px;line-height:13.5px;letter-spacing:0.400px;">09</div>
<div class="a" style="left:17px;top:348px;width:381px;height:21px;background:#fff;border-bottom:1px solid #d9d9d9"></div>
<div class="a" style="left:117px;top:348px;width:1px;height:21px;background:#d9d9d9"></div>
<div class="a" style="left:275px;top:348px;width:1px;height:21px;background:#d9d9d9"></div>
<div class="a" style="left:381px;top:348px;width:1px;height:21px;background:#d9d9d9"></div>
<div class="a" style="left:322px;top:348px;width:2px;height:21px;background:#a0a0a0"></div>
<div class="t" style="left:22.30px;top:352.27px;font-size:13.5px;line-height:13.5px;letter-spacing:0.400px;">0318.0951</div>
<div class="t" style="left:122.30px;top:352.27px;font-size:13.5px;line-height:13.5px;letter-spacing:-0.350px;">NGUYỄN THỊ CẨM TÚ</div>
<svg style="left:291px;top:352px" width="16" height="14"><path d="M4.5 1 h7 v4.5 h-7 z" fill="#fff" stroke="#7a7f86" stroke-width="1.1"/><rect x="0.5" y="5" width="15" height="6.5" rx="1.8" fill="#7d8186"/><rect x="4.5" y="5" width="7" height="1.2" fill="#3f7fd0"/><rect x="3.5" y="9" width="9" height="5" fill="#fff" stroke="#7a7f86" stroke-width="1.1"/><path d="M5.5 11.8 h5" stroke="#3f7fd0" stroke-width="1"/></svg>
<svg style="left:345px;top:352px" width="17" height="13"><rect x="0.5" y="0.5" width="7" height="12" fill="#b9d6f2" stroke="#3f70b8"/><rect x="9.5" y="0.5" width="7" height="12" fill="#b9d6f2" stroke="#3f70b8"/><path d="M1 3.5 h6 M1 6.5 h6 M1 9.5 h6 M10 3.5 h6 M10 6.5 h6 M10 9.5 h6" stroke="#fff" stroke-width="0.8"/><circle cx="8.5" cy="7" r="3.6" fill="#fff" stroke="#c02828" stroke-width="1.3"/><path d="M7.5 5.5 h2 v2.5" stroke="#333" stroke-width="1" fill="none"/></svg>
<div class="t" style="left:386.60px;top:352.27px;font-size:13.5px;line-height:13.5px;letter-spacing:0.400px;">01</div>
<div class="a" style="left:17px;top:369px;width:381px;height:21px;background:#fff;border-bottom:1px solid #d9d9d9"></div>
<div class="a" style="left:117px;top:369px;width:1px;height:21px;background:#d9d9d9"></div>
<div class="a" style="left:275px;top:369px;width:1px;height:21px;background:#d9d9d9"></div>
<div class="a" style="left:381px;top:369px;width:1px;height:21px;background:#d9d9d9"></div>
<div class="a" style="left:322px;top:369px;width:2px;height:21px;background:#a0a0a0"></div>
<div class="t" style="left:22.30px;top:373.27px;font-size:13.5px;line-height:13.5px;letter-spacing:0.400px;">0318.0950</div>
<div class="t" style="left:122.30px;top:373.27px;font-size:13.5px;line-height:13.5px;letter-spacing:-0.350px;">LÊ THỊ THANH MỘNG</div>
<svg style="left:291px;top:373px" width="16" height="14"><path d="M4.5 1 h7 v4.5 h-7 z" fill="#fff" stroke="#7a7f86" stroke-width="1.1"/><rect x="0.5" y="5" width="15" height="6.5" rx="1.8" fill="#7d8186"/><rect x="4.5" y="5" width="7" height="1.2" fill="#3f7fd0"/><rect x="3.5" y="9" width="9" height="5" fill="#fff" stroke="#7a7f86" stroke-width="1.1"/><path d="M5.5 11.8 h5" stroke="#3f7fd0" stroke-width="1"/></svg>
<svg style="left:345px;top:373px" width="17" height="13"><rect x="0.5" y="0.5" width="7" height="12" fill="#b9d6f2" stroke="#3f70b8"/><rect x="9.5" y="0.5" width="7" height="12" fill="#b9d6f2" stroke="#3f70b8"/><path d="M1 3.5 h6 M1 6.5 h6 M1 9.5 h6 M10 3.5 h6 M10 6.5 h6 M10 9.5 h6" stroke="#fff" stroke-width="0.8"/><circle cx="8.5" cy="7" r="3.6" fill="#fff" stroke="#c02828" stroke-width="1.3"/><path d="M7.5 5.5 h2 v2.5" stroke="#333" stroke-width="1" fill="none"/></svg>
<div class="t" style="left:386.60px;top:373.27px;font-size:13.5px;line-height:13.5px;letter-spacing:0.400px;">01</div>
<div class="a" style="left:17px;top:390px;width:381px;height:21px;background:#fff;border-bottom:1px solid #d9d9d9"></div>
<div class="a" style="left:117px;top:390px;width:1px;height:21px;background:#d9d9d9"></div>
<div class="a" style="left:275px;top:390px;width:1px;height:21px;background:#d9d9d9"></div>
<div class="a" style="left:381px;top:390px;width:1px;height:21px;background:#d9d9d9"></div>
<div class="a" style="left:322px;top:390px;width:2px;height:21px;background:#a0a0a0"></div>
<div class="t" style="left:22.30px;top:394.27px;font-size:13.5px;line-height:13.5px;letter-spacing:0.400px;">0318.0949</div>
<div class="t" style="left:122.30px;top:394.27px;font-size:13.5px;line-height:13.5px;letter-spacing:-0.350px;">HỒ MỘNG LONG</div>
<svg style="left:291px;top:394px" width="16" height="14"><path d="M4.5 1 h7 v4.5 h-7 z" fill="#fff" stroke="#7a7f86" stroke-width="1.1"/><rect x="0.5" y="5" width="15" height="6.5" rx="1.8" fill="#7d8186"/><rect x="4.5" y="5" width="7" height="1.2" fill="#3f7fd0"/><rect x="3.5" y="9" width="9" height="5" fill="#fff" stroke="#7a7f86" stroke-width="1.1"/><path d="M5.5 11.8 h5" stroke="#3f7fd0" stroke-width="1"/></svg>
<svg style="left:345px;top:394px" width="17" height="13"><rect x="0.5" y="0.5" width="7" height="12" fill="#b9d6f2" stroke="#3f70b8"/><rect x="9.5" y="0.5" width="7" height="12" fill="#b9d6f2" stroke="#3f70b8"/><path d="M1 3.5 h6 M1 6.5 h6 M1 9.5 h6 M10 3.5 h6 M10 6.5 h6 M10 9.5 h6" stroke="#fff" stroke-width="0.8"/><circle cx="8.5" cy="7" r="3.6" fill="#fff" stroke="#c02828" stroke-width="1.3"/><path d="M7.5 5.5 h2 v2.5" stroke="#333" stroke-width="1" fill="none"/></svg>
<div class="t" style="left:386.60px;top:394.27px;font-size:13.5px;line-height:13.5px;letter-spacing:0.400px;">09</div>
<div class="a" style="left:17px;top:411px;width:381px;height:21px;background:#fff;border-bottom:1px solid #d9d9d9"></div>
<div class="a" style="left:117px;top:411px;width:1px;height:21px;background:#d9d9d9"></div>
<div class="a" style="left:275px;top:411px;width:1px;height:21px;background:#d9d9d9"></div>
<div class="a" style="left:381px;top:411px;width:1px;height:21px;background:#d9d9d9"></div>
<div class="a" style="left:322px;top:411px;width:2px;height:21px;background:#a0a0a0"></div>
<div class="t" style="left:22.30px;top:415.27px;font-size:13.5px;line-height:13.5px;letter-spacing:0.400px;">0318.0948</div>
<div class="t" style="left:122.30px;top:415.27px;font-size:13.5px;line-height:13.5px;letter-spacing:-0.350px;">CHÂU THỊ LỆ</div>
<svg style="left:291px;top:415px" width="16" height="14"><path d="M4.5 1 h7 v4.5 h-7 z" fill="#fff" stroke="#7a7f86" stroke-width="1.1"/><rect x="0.5" y="5" width="15" height="6.5" rx="1.8" fill="#7d8186"/><rect x="4.5" y="5" width="7" height="1.2" fill="#3f7fd0"/><rect x="3.5" y="9" width="9" height="5" fill="#fff" stroke="#7a7f86" stroke-width="1.1"/><path d="M5.5 11.8 h5" stroke="#3f7fd0" stroke-width="1"/></svg>
<svg style="left:345px;top:415px" width="17" height="13"><rect x="0.5" y="0.5" width="7" height="12" fill="#b9d6f2" stroke="#3f70b8"/><rect x="9.5" y="0.5" width="7" height="12" fill="#b9d6f2" stroke="#3f70b8"/><path d="M1 3.5 h6 M1 6.5 h6 M1 9.5 h6 M10 3.5 h6 M10 6.5 h6 M10 9.5 h6" stroke="#fff" stroke-width="0.8"/><circle cx="8.5" cy="7" r="3.6" fill="#fff" stroke="#c02828" stroke-width="1.3"/><path d="M7.5 5.5 h2 v2.5" stroke="#333" stroke-width="1" fill="none"/></svg>
<div class="t" style="left:386.60px;top:415.27px;font-size:13.5px;line-height:13.5px;letter-spacing:0.400px;">09</div>
</div>
<div class="a" style="left:13px;top:769px;width:416px;height:1px;background:#a8a8a8"></div>
<div class="a" style="left:31px;top:349px;width:1px;height:420px;background:#c8c8c8"></div>
<div class="a" style="left:336px;top:328px;width:2px;height:21px;background:#a0a0a0"></div>
<div class="a" style="left:33px;top:773px;width:98px;height:24px;background:#fff;border:1px solid #a9a9a9"></div>
<div class="t" style="left:98.51px;top:779.77px;font-size:11.5px;line-height:11.5px;letter-spacing:0.300px;">6059</div>
<div class="a" style="left:13px;top:800px;width:416px;height:17px;background:#f0f0f0"></div>
<div class="a" style="left:30px;top:800px;width:84px;height:17px;background:#cdcdcd"></div>
<svg style="left:18px;top:804px" width="6" height="9"><path d="M5 0.5 L1 4.5 L5 8.5" stroke="#777" stroke-width="2.2" fill="none"/></svg>
<svg style="left:418px;top:804px" width="6" height="9"><path d="M1 0.5 L5 4.5 L1 8.5" stroke="#777" stroke-width="2.2" fill="none"/></svg>
<div class="a" style="left:434px;top:107px;width:1155px;height:715px;background:#fff;border-top:1px solid #a9a9a9;border-right:2px solid #a9a9a9;border-bottom:2px solid #a9a9a9"></div>
<div class="a" style="left:434px;top:108px;width:1px;height:712px;background:#e2e2e2"></div>
<div class="a" style="left:505px;top:85px;width:86px;height:23px;background:#fff;border:1px solid #a9a9a9"></div>
<div class="a" style="left:434px;top:83px;width:72px;height:25px;background:#fff;border:1px solid #a9a9a9;border-bottom:none;border-left:none"></div>
<div class="t" style="left:445.40px;top:89.00px;font-size:13px;line-height:13px;font-weight:700;color:#ff7070;letter-spacing:0.400px;">Điều trị</div>
<div class="t" style="left:516.40px;top:89.87px;font-size:13.5px;line-height:13.5px;letter-spacing:0.273px;">Toa thuốc</div>
<div class="a" style="left:435px;top:119px;width:223px;height:307px;border:1px solid #d9d9d9"></div>
<div class="a" style="left:440.5px;top:113px;width:122px;height:12px;background:#fff"></div>
<svg style="left:446.5px;top:116px" width="6" height="6"><circle cx="3" cy="3" r="2.6" fill="#c41420"/></svg>
<div class="t" style="left:457.50px;top:112.00px;font-size:13px;line-height:13px;font-weight:700;color:#c41420;letter-spacing:0.191px;">Lịch sử điều trị</div>
<div class="a" style="left:436px;top:129px;width:220px;height:295px;background:#fff;border:1px solid #a9a9a9"></div>
<div class="a" style="left:437px;top:150px;width:218px;height:1px;background:#bdbdbd"></div>
<div class="a" style="left:455px;top:130px;width:1px;height:41px;background:#cfcfcf"></div>
<div class="a" style="left:575px;top:130px;width:1px;height:41px;background:#cfcfcf"></div>
<div class="a" style="left:615px;top:130px;width:1px;height:41px;background:#cfcfcf"></div>
<div class="t" style="left:482.00px;top:132.80px;font-size:13px;line-height:13px;transform:scaleX(0.9761);transform-origin:0 0;font-weight:700;letter-spacing:-0.220px;">Ngày khám</div>
<div class="t" style="left:583.00px;top:132.80px;font-size:13px;line-height:13px;transform:scaleX(0.9643);transform-origin:0 0;font-weight:700;letter-spacing:-0.220px;">Sửa</div>
<div class="t" style="left:623.03px;top:132.80px;font-size:13px;line-height:13px;font-weight:700;letter-spacing:0.052px;">Xóa</div>
<div class="a" style="left:456px;top:151px;width:119px;height:20px;background:#e5f1fb"></div>
<div class="a" style="left:616px;top:151px;width:39px;height:20px;background:#e5f1fb"></div>
<div class="a" style="left:455px;top:171px;width:200px;height:1px;background:#d9d9d9"></div>
<svg style="left:444px;top:157px" width="5" height="8"><path d="M0.5 0.5 L4.5 4 L0.5 7.5 Z" fill="#555"/></svg>
<div class="t" style="left:460.50px;top:154.97px;font-size:13.5px;line-height:13.5px;letter-spacing:0.502px;">22/03/2018</div>
<svg style="left:587px;top:152px" width="17" height="17"><path d="M3 14 L13.5 3.5" stroke="#9a7400" stroke-width="5.2"/><path d="M3 14 L13.5 3.5" stroke="#f4c800" stroke-width="3.4"/><path d="M2.6 12.8 L12.8 2.6" stroke="#fff6b0" stroke-width="0.9"/><path d="M13 4 L15.5 1.5" stroke="#d02a2a" stroke-width="4.4" stroke-linecap="round"/><path d="M12.6 4.4 L13.8 3.2" stroke="#c8c8d0" stroke-width="4.6"/><path d="M3.8 13.2 L1 16 L2 12.5 Z" fill="#f0b8a0" stroke="#b06050" stroke-width="0.6"/></svg>
<svg style="left:629px;top:154px" width="14" height="14"><path d="M1.3 1.3 L12.7 12.7 M12.7 1.3 L1.3 12.7" stroke="#dc3c1c" stroke-width="4.4"/><path d="M1.8 1.8 L12.2 12.2 M12.2 1.8 L1.8 12.2" stroke="#ff8a6a" stroke-width="2.3"/></svg>
<div class="a" style="left:437px;top:406px;width:218px;height:17px;background:#f0f0f0"></div>
<div class="a" style="left:454px;top:406px;width:182px;height:17px;background:#cdcdcd"></div>
<svg style="left:441px;top:410px" width="9" height="9"><path d="M4.5 0.5 L0.5 4.5 L4.5 8.5" stroke="#777" stroke-width="2.2" fill="none"/></svg>
<svg style="left:645px;top:410px" width="9" height="9"><path d="M0.5 0.5 L4.5 4.5 L0.5 8.5" stroke="#777" stroke-width="2.2" fill="none"/></svg>
<div class="a" style="left:659px;top:119px;width:929px;height:307px;border:1px solid #d9d9d9"></div>
<div class="a" style="left:665.8px;top:113px;width:135.7px;height:12px;background:#fff"></div>
<svg style="left:671.8px;top:116px" width="6" height="6"><circle cx="3" cy="3" r="2.6" fill="#c41420"/></svg>
<div class="t" style="left:682.80px;top:112.00px;font-size:13px;line-height:13px;font-weight:700;color:#c41420;letter-spacing:0.252px;">Thông tin điều trị</div>
<div class="a" style="left:662px;top:130px;width:120px;height:30px;background:linear-gradient(#f4f4f4,#e4e4e4);border:1px solid #b4b4b4"></div>
<div class="a" style="left:784px;top:130px;width:120px;height:30px;background:linear-gradient(#f4f4f4,#e4e4e4);border:1px solid #b4b4b4"></div>
<div class="a" style="left:906px;top:130px;width:120px;height:30px;background:linear-gradient(#f4f4f4,#e4e4e4);border:1px solid #b4b4b4"></div>
<div class="a" style="left:1028px;top:130px;width:120px;height:30px;background:linear-gradient(#f4f4f4,#e4e4e4);border:1px solid #b4b4b4"></div>
<div class="a" style="left:1150px;top:130px;width:79px;height:30px;background:linear-gradient(#f4f4f4,#e4e4e4);border:1px solid #b4b4b4"></div>
<svg style="left:683px;top:137px" width="15" height="15"><defs><linearGradient id="gp" x1="0" y1="0" x2="0" y2="1"><stop offset="0" stop-color="#8fe07a"/><stop offset="1" stop-color="#1f9a1f"/></linearGradient></defs><path d="M5.5 0.5 h3.5 v5 h5 v3.5 h-5 v5.5 h-3.5 v-5.5 h-5 v-3.5 h5 z" fill="url(#gp)" stroke="#217a21" stroke-width="0.9" stroke-linejoin="round"/></svg>
<div class="t" style="left:701.00px;top:137.57px;font-size:13.5px;line-height:13.5px;letter-spacing:-0.170px;">Thêm mới</div>
<svg style="left:822px;top:138px" width="14" height="14"><path d="M0.5 0.5 h11 l2 2 v11 h-13 z" fill="#2a2a2a"/><rect x="3" y="1" width="7.5" height="4.5" fill="#e8e8e8"/><rect x="7.5" y="1.6" width="2" height="3" fill="#2a2a2a"/><rect x="2.5" y="8" width="9" height="5" fill="#f4f4f4"/></svg>
<div class="t" style="left:840.80px;top:137.77px;font-size:13.5px;line-height:13.5px;transform:scaleX(0.9567);transform-origin:0 0;letter-spacing:-0.220px;">Lưu</div>
<svg style="left:926px;top:137px" width="14" height="14"><path d="M3.5 0.5 h7 v4 h-7 z" fill="#fff" stroke="#a8a8a8"/><rect x="0.5" y="4.5" width="13" height="6" rx="1" fill="#b8b8b8"/><rect x="3.5" y="8.5" width="7" height="5" fill="#fff" stroke="#a8a8a8"/></svg>
<div class="t" style="left:944.20px;top:137.77px;font-size:13.5px;line-height:13.5px;color:#a3a3a3;letter-spacing:0.497px;">In điều trị</div>
<svg style="left:1040px;top:137px" width="14" height="14"><path d="M3.5 0.5 h7 v4 h-7 z" fill="#fff" stroke="#a8a8a8"/><rect x="0.5" y="4.5" width="13" height="6" rx="1" fill="#b8b8b8"/><rect x="3.5" y="8.5" width="7" height="5" fill="#fff" stroke="#a8a8a8"/></svg>
<div class="t" style="left:1058.20px;top:137.77px;font-size:13.5px;line-height:13.5px;color:#a3a3a3;letter-spacing:0.486px;">In phiếu thu</div>
<svg style="left:1161px;top:136px" width="16" height="16"><rect x="0.5" y="3.5" width="12" height="12" fill="#fff" stroke="#b0b0b0"/><path d="M1 15 L5 10 L8 13 L12 9 V15 Z" fill="#c8c8c8"/><path d="M9 6 L14 1 M11 1 h3 v3" stroke="#9a9a9a" stroke-width="1.4" fill="none"/></svg>
<div class="t" style="left:1185.00px;top:138.57px;font-size:13.5px;line-height:13.5px;transform:scaleX(0.9867);transform-origin:0 0;color:#a3a3a3;letter-spacing:-0.220px;">Hình</div>
<div class="t" style="left:664.00px;top:166.57px;font-size:13.5px;line-height:13.5px;letter-spacing:0.137px;">Ngày khám:</div>
<div class="a" style="left:743px;top:164px;width:223px;height:21px;background:#fff;border:1px solid #a9a9a9;border-bottom-color:#dadada;border-right-color:#dadada"></div>
<div class="a" style="left:949px;top:165px;width:16px;height:19px;background:#f0f0f0;border-left:1px solid #c4c4c4"></div>
<svg style="left:952.5px;top:171.5px" width="9" height="9"><path d="M0.5 0.5 L4.5 4.5 L8.5 0.5" stroke="#555" stroke-width="1.8" fill="none"/></svg>
<div class="t" style="left:748.40px;top:168.57px;font-size:13.5px;line-height:13.5px;letter-spacing:0.586px;">22/03/2018 15:41:54</div>
<div class="t" style="left:971.00px;top:167.37px;font-size:13.5px;line-height:13.5px;letter-spacing:-0.181px;">Bác sĩ:</div>
<div class="a" style="left:1016px;top:164px;width:567px;height:21px;background:#fff;border:1px solid #a9a9a9;border-bottom-color:#dadada;border-right-color:#dadada"></div>
<div class="a" style="left:1566px;top:165px;width:16px;height:19px;background:#f0f0f0;border-left:1px solid #c4c4c4"></div>
<svg style="left:1569.5px;top:171.5px" width="9" height="9"><path d="M0.5 0.5 L4.5 4.5 L8.5 0.5" stroke="#555" stroke-width="1.8" fill="none"/></svg>
<div class="a" style="left:662px;top:199px;width:925px;height:226px;border-top:1px solid #d9d9d9;border-left:1px solid #d9d9d9"></div>
<div class="a" style="left:668px;top:193px;width:95px;height:12px;background:#fff"></div>
<svg style="left:674px;top:196px" width="6" height="6"><circle cx="3" cy="3" r="2.6" fill="#c41420"/></svg>
<div class="t" style="left:685.30px;top:191.70px;font-size:13px;line-height:13px;font-weight:700;color:#c41420;letter-spacing:0.080px;">Sơ đồ răng</div>
<svg style="left:667px;top:212px" width="14" height="14"><rect x="0.5" y="0.5" width="12" height="12" fill="#fff" stroke="#9a9a9a"/></svg>
<div class="t" style="left:684.00px;top:212.20px;font-size:13px;line-height:13px;font-weight:700;color:#006400;letter-spacing:0.414px;">Răng trẻ em</div>
<div class="t" style="left:784.00px;top:210.97px;font-size:13.5px;line-height:13.5px;color:#f00000;letter-spacing:0.125px;">R11; R12; R13; R14; R15;</div>
<svg style="left:1330px;top:212px" width="14" height="14"><rect x="0.5" y="0.5" width="12" height="12" fill="#fff" stroke="#9a9a9a"/></svg>
<div class="t" style="left:1347.50px;top:212.70px;font-size:13px;line-height:13px;font-weight:700;color:#006400;letter-spacing:0.455px;">Hàm trên</div>
<svg style="left:1417px;top:212px" width="14" height="14"><rect x="0.5" y="0.5" width="12" height="12" fill="#fff" stroke="#9a9a9a"/></svg>
<div class="t" style="left:1434.50px;top:212.70px;font-size:13px;line-height:13px;font-weight:700;color:#006400;">Hàm dưới</div>
<svg style="left:1508px;top:212px" width="14" height="14"><rect x="0.5" y="0.5" width="12" height="12" fill="#fff" stroke="#9a9a9a"/></svg>
<div class="t" style="left:1525.50px;top:212.70px;font-size:13px;line-height:13px;font-weight:700;color:#006400;letter-spacing:0.417px;">Hai hàm</div>
<div class="a" style="left:435px;top:438px;width:815px;height:177px;border:1px solid #d9d9d9"></div>
<div class="a" style="left:440.4px;top:432px;width:73.5px;height:12px;background:#fff"></div>
<svg style="left:446.4px;top:435px" width="6" height="6"><circle cx="3" cy="3" r="2.6" fill="#c41420"/></svg>
<div class="t" style="left:457.40px;top:431.00px;font-size:13px;line-height:13px;font-weight:700;color:#c41420;letter-spacing:0.463px;">Điều trị</div>
<div class="t" style="left:437.70px;top:464.57px;font-size:13.5px;line-height:13.5px;letter-spacing:0.299px;">Chẩn đoán:</div>
<div class="t" style="left:461.48px;top:508.07px;font-size:13.5px;line-height:13.5px;letter-spacing:0.276px;">Điều trị:</div>
<div class="t" style="left:461.23px;top:542.97px;font-size:13.5px;line-height:13.5px;letter-spacing:0.027px;">Dịch vụ:</div>
<div class="t" style="left:446.47px;top:563.97px;font-size:13.5px;line-height:13.5px;letter-spacing:0.271px;">Bảo hành:</div>
<div class="a" style="left:514px;top:450px;width:733px;height:41px;background:#fff;border:1px solid #a9a9a9;border-bottom-color:#dadada;border-right-color:#dadada"></div>
<div class="a" style="left:1229px;top:451px;width:17px;height:39px;background:#f2f2f2"></div>
<svg style="left:1233px;top:458px" width="9" height="9"><path d="M0.5 4.5 L4.5 0.5 L8.5 4.5" stroke="#c4c4c4" stroke-width="1.9" fill="none"/></svg>
<svg style="left:1233px;top:479px" width="9" height="9"><path d="M0.5 0.5 L4.5 4.5 L8.5 0.5" stroke="#c4c4c4" stroke-width="1.9" fill="none"/></svg>
<div class="a" style="left:514px;top:494px;width:733px;height:39px;background:#fff;border:1px solid #a9a9a9;border-bottom-color:#dadada;border-right-color:#dadada"></div>
<div class="a" style="left:1229px;top:495px;width:17px;height:37px;background:#f2f2f2"></div>
<svg style="left:1233px;top:500px" width="9" height="9"><path d="M0.5 4.5 L4.5 0.5 L8.5 4.5" stroke="#c4c4c4" stroke-width="1.9" fill="none"/></svg>
<svg style="left:1233px;top:521px" width="9" height="9"><path d="M0.5 0.5 L4.5 4.5 L8.5 0.5" stroke="#c4c4c4" stroke-width="1.9" fill="none"/></svg>
<div class="a" style="left:514px;top:536px;width:733px;height:21px;background:#fff;border:1px solid #a9a9a9;border-bottom-color:#dadada;border-right-color:#dadada"></div>
<div class="a" style="left:1198px;top:537px;width:48px;height:19px;background:#f0f0f0"></div>
<div class="a" style="left:1198px;top:537px;width:1px;height:19px;background:#c4c4c4"></div>
<div class="a" style="left:1214px;top:537px;width:1px;height:19px;background:#c4c4c4"></div>
<div class="a" style="left:1230px;top:537px;width:1px;height:19px;background:#c4c4c4"></div>
<svg style="left:1202px;top:544px" width="9" height="9"><path d="M0.5 0.5 L4.5 4.5 L8.5 0.5" stroke="#555" stroke-width="2" fill="none"/></svg>
<svg style="left:1217px;top:545px" width="11" height="3"><rect x="0.5" y="0" width="2.2" height="2.2" fill="#555"/><rect x="4.4" y="0" width="2.2" height="2.2" fill="#555"/><rect x="8.3" y="0" width="2.2" height="2.2" fill="#555"/></svg>
<svg style="left:1234px;top:542px" width="9" height="9"><path d="M1 1 L8 8 M8 1 L1 8" stroke="#555" stroke-width="2.2"/></svg>
<div class="a" style="left:514px;top:560px;width:40px;height:21px;background:#fff;border:1px solid #a9a9a9;border-bottom-color:#dadada;border-right-color:#dadada"></div>
<svg style="left:558.3px;top:565px" width="14" height="14"><circle cx="7" cy="7" r="6" fill="#fff" stroke="#9a9a9a" stroke-width="1"/></svg>
<div class="t" style="left:575.90px;top:565.97px;font-size:13.5px;line-height:13.5px;letter-spacing:0.144px;">Tháng</div>
<svg style="left:623.3px;top:565px" width="14" height="14"><circle cx="7" cy="7" r="6" fill="#fff" stroke="#9a9a9a" stroke-width="1"/></svg>
<div class="t" style="left:641.00px;top:565.97px;font-size:13.5px;line-height:13.5px;transform:scaleX(0.9831);transform-origin:0 0;letter-spacing:-0.220px;">Năm</div>
<svg style="left:677.1px;top:565px" width="14" height="14"><circle cx="7" cy="7" r="6" fill="#fff" stroke="#9a9a9a" stroke-width="1"/></svg>
<div class="t" style="left:695.00px;top:565.97px;font-size:13.5px;line-height:13.5px;letter-spacing:-0.068px;">Không BH</div>
<svg style="left:764.1px;top:565px" width="14" height="14"><circle cx="7" cy="7" r="6" fill="#fff" stroke="#9a9a9a" stroke-width="1"/><circle cx="7" cy="7" r="3.2" fill="#222"/></svg>
<div class="t" style="left:782.20px;top:565.97px;font-size:13.5px;line-height:13.5px;letter-spacing:0.154px;">Không chọn</div>
<div class="a" style="left:436px;top:584px;width:812px;height:29px;background:linear-gradient(#f4f4f4,#e4e4e4);border:1px solid #b4b4b4"></div>
<svg style="left:779px;top:591px" width="12" height="16"><path d="M3.7 0.5 h4.6 v4.8 h3 L6 10.8 L0.7 5.3 h3 z" fill="#9ad85a" stroke="#3c8a1e" stroke-width="0.9"/><path d="M1.5 13.5 h9" stroke="#3c8a1e" stroke-width="1.6"/></svg>
<div class="t" style="left:795.00px;top:592.77px;font-size:13.5px;line-height:13.5px;letter-spacing:0.234px;">Thêm điều trị [F1]</div>
<div class="a" style="left:1252px;top:438px;width:335px;height:177px;border:1px solid #d9d9d9"></div>
<div class="a" style="left:1257.5px;top:432px;width:159px;height:12px;background:#fff"></div>
<svg style="left:1263.5px;top:435px" width="6" height="6"><circle cx="3" cy="3" r="2.6" fill="#c41420"/></svg>
<div class="t" style="left:1274.50px;top:431.20px;font-size:13px;line-height:13px;font-weight:700;color:#c41420;letter-spacing:0.237px;">Thông tin thanh toán</div>
<div class="t" style="left:1274.67px;top:453.17px;font-size:13.5px;line-height:13.5px;letter-spacing:0.167px;">Thu ngân:</div>
<div class="t" style="left:1256.68px;top:473.07px;font-size:13.5px;line-height:13.5px;letter-spacing:-0.121px;">Hình thức TT:</div>
<div class="t" style="left:1274.73px;top:497.97px;font-size:13.5px;line-height:13.5px;letter-spacing:0.225px;">Tổng tiền:</div>
<div class="t" style="left:1279.18px;top:522.37px;font-size:13.5px;line-height:13.5px;letter-spacing:-0.020px;">Giảm giá:</div>
<div class="t" style="left:1266.57px;top:546.17px;font-size:13.5px;line-height:13.5px;letter-spacing:0.268px;">Thành tiền:</div>
<div class="t" style="left:1261.52px;top:570.17px;font-size:13.5px;line-height:13.5px;letter-spacing:0.322px;">Thanh toán:</div>
<div class="t" style="left:1289.95px;top:594.77px;font-size:13.5px;line-height:13.5px;letter-spacing:0.152px;">Còn lại:</div>
<div class="a" style="left:1341px;top:449px;width:241px;height:21px;background:#fff;border:1px solid #a9a9a9;border-bottom-color:#dadada;border-right-color:#dadada"></div>
<div class="a" style="left:1565px;top:450px;width:16px;height:19px;background:#f0f0f0;border-left:1px solid #c4c4c4"></div>
<svg style="left:1568.5px;top:456.5px" width="9" height="9"><path d="M0.5 0.5 L4.5 4.5 L8.5 0.5" stroke="#c8c8c8" stroke-width="1.8" fill="none"/></svg>
<div class="a" style="left:1341px;top:471px;width:241px;height:21px;background:#fff;border:1px solid #a9a9a9;border-bottom-color:#dadada;border-right-color:#dadada"></div>
<div class="a" style="left:1565px;top:472px;width:16px;height:19px;background:#f0f0f0;border-left:1px solid #c4c4c4"></div>
<svg style="left:1568.5px;top:478.5px" width="9" height="9"><path d="M0.5 0.5 L4.5 4.5 L8.5 0.5" stroke="#555" stroke-width="1.8" fill="none"/></svg>
<div class="a" style="left:1341px;top:494px;width:241px;height:22px;background:#f0f0f0;border:1px solid #a9a9a9;border-bottom-color:#dadada;border-right-color:#dadada"></div>
<div class="a" style="left:1565px;top:495px;width:16px;height:20px;background:#f0f0f0;border-left:1px solid #c4c4c4"></div>
<svg style="left:1568.5px;top:502.0px" width="9" height="9"><path d="M0.5 0.5 L4.5 4.5 L8.5 0.5" stroke="#c8c8c8" stroke-width="1.8" fill="none"/></svg>
<div class="a" style="left:1341px;top:518px;width:241px;height:22px;background:#f0f0f0;border:1px solid #a9a9a9;border-bottom-color:#dadada;border-right-color:#dadada"></div>
<div class="a" style="left:1565px;top:519px;width:16px;height:20px;background:#f0f0f0;border-left:1px solid #c4c4c4"></div>
<svg style="left:1568.5px;top:526.0px" width="9" height="9"><path d="M0.5 0.5 L4.5 4.5 L8.5 0.5" stroke="#c8c8c8" stroke-width="1.8" fill="none"/></svg>
<div class="a" style="left:1341px;top:542px;width:241px;height:22px;background:#f0f0f0;border:1px solid #a9a9a9;border-bottom-color:#dadada;border-right-color:#dadada"></div>
<div class="a" style="left:1565px;top:543px;width:16px;height:20px;background:#f0f0f0;border-left:1px solid #c4c4c4"></div>
<svg style="left:1568.5px;top:550.0px" width="9" height="9"><path d="M0.5 0.5 L4.5 4.5 L8.5 0.5" stroke="#c8c8c8" stroke-width="1.8" fill="none"/></svg>
<div class="a" style="left:1341px;top:566px;width:241px;height:22px;background:#fff;border:1px solid #a9a9a9;border-bottom-color:#dadada;border-right-color:#dadada"></div>
<div class="a" style="left:1565px;top:567px;width:16px;height:20px;background:#f0f0f0;border-left:1px solid #c4c4c4"></div>
<svg style="left:1568.5px;top:574.0px" width="9" height="9"><path d="M0.5 0.5 L4.5 4.5 L8.5 0.5" stroke="#555" stroke-width="1.8" fill="none"/></svg>
<div class="a" style="left:1341px;top:590px;width:241px;height:22px;background:#f0f0f0;border:1px solid #a9a9a9;border-bottom-color:#dadada;border-right-color:#dadada"></div>
<div class="a" style="left:1565px;top:591px;width:16px;height:20px;background:#f0f0f0;border-left:1px solid #c4c4c4"></div>
<svg style="left:1568.5px;top:598.0px" width="9" height="9"><path d="M0.5 0.5 L4.5 4.5 L8.5 0.5" stroke="#c8c8c8" stroke-width="1.8" fill="none"/></svg>
<div class="t" style="left:1346.20px;top:453.57px;font-size:13.5px;line-height:13.5px;letter-spacing:0.124px;">Quản lý</div>
<div class="t" style="left:1346.20px;top:475.87px;font-size:13.5px;line-height:13.5px;letter-spacing:0.385px;">Thanh toán tiền mặt</div>
<div class="t" style="left:1481.69px;top:498.05px;font-size:14px;line-height:14px;font-weight:700;color:#14147a;letter-spacing:1.092px;">30.200.000</div>
<div class="t" style="left:1553.80px;top:522.05px;font-size:14px;line-height:14px;font-weight:700;color:#003030;">0</div>
<div class="t" style="left:1481.69px;top:545.85px;font-size:14px;line-height:14px;font-weight:700;color:#f00000;letter-spacing:1.092px;">30.200.000</div>
<div class="t" style="left:1505.00px;top:569.95px;font-size:14px;line-height:14px;font-weight:700;color:#003030;letter-spacing:0.999px;">500.000</div>
<div class="t" style="left:1474.81px;top:594.15px;font-size:14px;line-height:14px;font-weight:700;color:#c000c0;letter-spacing:1.206px;">-29.700.000</div>
<div class="a" style="left:435px;top:626px;width:1152px;height:167px;border:1px solid #d9d9d9"></div>
<div class="a" style="left:440.2px;top:620px;width:123px;height:12px;background:#fff"></div>
<svg style="left:446.2px;top:623px" width="6" height="6"><circle cx="3" cy="3" r="2.6" fill="#c41420"/></svg>
<div class="t" style="left:457.20px;top:619.00px;font-size:13px;line-height:13px;font-weight:700;color:#c41420;letter-spacing:0.412px;">Chi tiết điều trị</div>
<div class="a" style="left:436px;top:636px;width:1151px;height:155px;background:#fff;border:1px solid #a9a9a9"></div>
<div class="a" style="left:455px;top:637px;width:1px;height:62px;background:#cfcfcf"></div>
<div class="a" style="left:575px;top:637px;width:1px;height:62px;background:#cfcfcf"></div>
<div class="a" style="left:681px;top:637px;width:1px;height:62px;background:#cfcfcf"></div>
<div class="a" style="left:950px;top:637px;width:1px;height:62px;background:#cfcfcf"></div>
<div class="a" style="left:1150px;top:637px;width:1px;height:62px;background:#cfcfcf"></div>
<div class="a" style="left:1202px;top:637px;width:1px;height:62px;background:#cfcfcf"></div>
<div class="a" style="left:1292px;top:637px;width:1px;height:62px;background:#cfcfcf"></div>
<div class="a" style="left:1342px;top:637px;width:1px;height:62px;background:#cfcfcf"></div>
<div class="a" style="left:1422px;top:637px;width:1px;height:62px;background:#cfcfcf"></div>
<div class="a" style="left:1512px;top:637px;width:1px;height:62px;background:#cfcfcf"></div>
<div class="a" style="left:1546px;top:637px;width:1px;height:62px;background:#cfcfcf"></div>
<div class="a" style="left:950px;top:637px;width:2px;height:62px;background:#a8a8a8"></div>
<div class="a" style="left:1546px;top:637px;width:2px;height:62px;background:#a8a8a8"></div>
<div class="a" style="left:437px;top:657px;width:1149px;height:1px;background:#bdbdbd"></div>
<div class="t" style="left:488.47px;top:639.30px;font-size:13px;line-height:13px;font-weight:700;letter-spacing:-0.151px;">Tên răng</div>
<div class="t" style="left:595.42px;top:639.30px;font-size:13px;line-height:13px;font-weight:700;letter-spacing:-0.164px;">Chẩn đoán</div>
<div class="t" style="left:793.04px;top:639.30px;font-size:13px;line-height:13px;font-weight:700;letter-spacing:0.075px;">Điều trị</div>
<div class="t" style="left:1028.40px;top:639.30px;font-size:13px;line-height:13px;transform:scaleX(0.9639);transform-origin:0 0;font-weight:700;letter-spacing:-0.220px;">Dịch vụ</div>
<div class="t" style="left:1168.90px;top:639.30px;font-size:13px;line-height:13px;transform:scaleX(0.9265);transform-origin:0 0;font-weight:700;letter-spacing:-0.220px;">SL</div>
<div class="t" style="left:1238.05px;top:639.30px;font-size:13px;line-height:13px;transform:scaleX(0.9012);transform-origin:0 0;font-weight:700;letter-spacing:-0.220px;">Giá</div>
<div class="t" style="left:1299.41px;top:639.30px;font-size:13px;line-height:13px;font-weight:700;letter-spacing:0.013px;">%Gi...</div>
<div class="t" style="left:1356.80px;top:639.30px;font-size:13px;line-height:13px;transform:scaleX(0.9647);transform-origin:0 0;font-weight:700;letter-spacing:-0.220px;">Giảm giá</div>
<div class="t" style="left:1434.64px;top:639.30px;font-size:13px;line-height:13px;font-weight:700;letter-spacing:-0.022px;">Thành tiền</div>
<div class="t" style="left:1528.00px;top:639.30px;font-size:13px;line-height:13px;font-weight:700;letter-spacing:0.300px;">Bá</div>
<div class="t" style="left:1554.65px;top:639.30px;font-size:13px;line-height:13px;transform:scaleX(0.9486);transform-origin:0 0;font-weight:700;letter-spacing:-0.220px;">Xóa</div>
<div class="a" style="left:1544px;top:638px;width:2px;height:19px;background:#fff"></div>
<div class="a" style="left:1547px;top:638px;width:0px;height:0px;"></div>
<div class="a" style="left:456px;top:658px;width:1130px;height:20px;background:#fff"></div>
<div class="a" style="left:455px;top:678px;width:1131px;height:1px;background:#d9d9d9"></div>
<div class="a" style="left:456px;top:679px;width:1130px;height:20px;background:#00ffff"></div>
<div class="a" style="left:455px;top:699px;width:1131px;height:1px;background:#d9d9d9"></div>
<div class="a" style="left:455px;top:658px;width:1px;height:41px;background:#cfcfcf"></div>
<div class="a" style="left:575px;top:658px;width:1px;height:41px;background:#cfcfcf"></div>
<div class="a" style="left:681px;top:658px;width:1px;height:41px;background:#cfcfcf"></div>
<div class="a" style="left:950px;top:658px;width:1px;height:41px;background:#cfcfcf"></div>
<div class="a" style="left:1150px;top:658px;width:1px;height:41px;background:#cfcfcf"></div>
<div class="a" style="left:1202px;top:658px;width:1px;height:41px;background:#cfcfcf"></div>
<div class="a" style="left:1292px;top:658px;width:1px;height:41px;background:#cfcfcf"></div>
<div class="a" style="left:1342px;top:658px;width:1px;height:41px;background:#cfcfcf"></div>
<div class="a" style="left:1422px;top:658px;width:1px;height:41px;background:#cfcfcf"></div>
<div class="a" style="left:1512px;top:658px;width:1px;height:41px;background:#cfcfcf"></div>
<div class="a" style="left:1546px;top:658px;width:1px;height:41px;background:#cfcfcf"></div>
<div class="a" style="left:950px;top:658px;width:2px;height:41px;background:#a8a8a8"></div>
<div class="a" style="left:1546px;top:658px;width:2px;height:41px;background:#a8a8a8"></div>
<svg style="left:444px;top:685px" width="5" height="8"><path d="M0.5 0.5 L4.5 4 L0.5 7.5 Z" fill="#555"/></svg>
<div class="t" style="left:460.80px;top:661.57px;font-size:13.5px;line-height:13.5px;letter-spacing:0.135px;">R11-&gt;R15</div>
<div class="t" style="left:460.80px;top:682.57px;font-size:13.5px;line-height:13.5px;letter-spacing:0.300px;">R36;</div>
<div class="t" style="left:955.60px;top:661.57px;font-size:13.5px;line-height:13.5px;transform:scaleX(0.9161);transform-origin:0 0;letter-spacing:-0.220px;">TRÁM RĂNG SÂU LỚN</div>
<div class="t" style="left:955.60px;top:682.57px;font-size:13.5px;line-height:13.5px;transform:scaleX(0.9075);transform-origin:0 0;letter-spacing:-0.220px;">TRÁM RĂNG THẪM MỸ</div>
<div class="t" style="left:1190.48px;top:661.57px;font-size:13.5px;line-height:13.5px;">1</div>
<div class="t" style="left:1190.48px;top:682.57px;font-size:13.5px;line-height:13.5px;">1</div>
<div class="t" style="left:1217.50px;top:661.57px;font-size:13.5px;line-height:13.5px;letter-spacing:0.402px;">30.000.000</div>
<div class="t" style="left:1237.58px;top:682.57px;font-size:13.5px;line-height:13.5px;letter-spacing:0.384px;">200.000</div>
<div class="t" style="left:1410.88px;top:661.57px;font-size:13.5px;line-height:13.5px;">0</div>
<div class="t" style="left:1436.90px;top:661.57px;font-size:13.5px;line-height:13.5px;letter-spacing:0.402px;">30.000.000</div>
<div class="t" style="left:1456.98px;top:682.57px;font-size:13.5px;line-height:13.5px;letter-spacing:0.384px;">200.000</div>
<div class="a" style="left:1343px;top:679px;width:80px;height:20px;background:#fff;border:1px dotted #222"></div>
<div class="a" style="left:1405px;top:680px;width:17px;height:18px;background:#f0f0f0;border-left:1px solid #c4c4c4"></div>
<svg style="left:1409px;top:686px" width="9" height="9"><path d="M0.5 0.5 L4.5 4.5 L8.5 0.5" stroke="#555" stroke-width="1.4" fill="none"/></svg>
<div class="t" style="left:1394.48px;top:682.57px;font-size:13.5px;line-height:13.5px;">0</div>
<svg style="left:1560px;top:661px" width="14" height="14"><path d="M1.3 1.3 L12.7 12.7 M12.7 1.3 L1.3 12.7" stroke="#dc3c1c" stroke-width="4.4"/><path d="M1.8 1.8 L12.2 12.2 M12.2 1.8 L1.8 12.2" stroke="#ff8a6a" stroke-width="2.3"/></svg>
<svg style="left:1560px;top:682px" width="14" height="14"><path d="M1.3 1.3 L12.7 12.7 M12.7 1.3 L1.3 12.7" stroke="#dc3c1c" stroke-width="4.4"/><path d="M1.8 1.8 L12.2 12.2 M12.2 1.8 L1.8 12.2" stroke="#ff8a6a" stroke-width="2.3"/></svg>
<div class="a" style="left:437px;top:773px;width:1149px;height:17px;background:#f0f0f0"></div>
<div class="a" style="left:454px;top:773px;width:671px;height:17px;background:#cdcdcd"></div>
<svg style="left:441px;top:777px" width="9" height="9"><path d="M4.5 0.5 L0.5 4.5 L4.5 8.5" stroke="#777" stroke-width="2.2" fill="none"/></svg>
<svg style="left:1574px;top:777px" width="9" height="9"><path d="M0.5 0.5 L4.5 4.5 L0.5 8.5" stroke="#777" stroke-width="2.2" fill="none"/></svg>
<svg style="left:437px;top:800px" width="14" height="14"><rect x="0.5" y="0.5" width="12" height="12" fill="#fff" stroke="#9a9a9a"/><path d="M2.5 6.5 L5.2 9.5 L10.5 3" stroke="#333" stroke-width="1.8" fill="none"/></svg>
<div class="t" style="left:454.20px;top:800.90px;font-size:13px;line-height:13px;font-weight:700;color:#8b0000;letter-spacing:0.440px;">Hẹn tái khám</div>
<div class="a" style="left:545px;top:797px;width:38px;height:20px;background:#fff;border:1px solid #a9a9a9;border-bottom-color:#dadada;border-right-color:#dadada"></div>
<div class="t" style="left:560.10px;top:799.85px;font-size:14px;line-height:14px;font-weight:700;">0</div>
<div class="a" style="left:586px;top:797px;width:111px;height:20px;background:#fff;border:1px solid #a9a9a9;border-bottom-color:#dadada;border-right-color:#dadada"></div>
<div class="a" style="left:682px;top:798px;width:15px;height:18px;background:#f0f0f0;border-left:1px solid #c4c4c4"></div>
<svg style="left:685.0px;top:804.0px" width="9" height="9"><path d="M0.5 0.5 L4.5 4.5 L8.5 0.5" stroke="#888" stroke-width="1.8" fill="none"/></svg>
<div class="t" style="left:590.90px;top:799.85px;font-size:14px;line-height:14px;font-weight:700;letter-spacing:1.592px;">13/09/2018</div>
<div class="a" style="left:700px;top:797px;width:52px;height:20px;background:#fff;border:1px solid #a9a9a9;border-bottom-color:#dadada;border-right-color:#dadada"></div>
<div class="a" style="left:737px;top:798px;width:15px;height:18px;background:#f0f0f0;border-left:1px solid #c4c4c4"></div>
<svg style="left:740.0px;top:804.0px" width="9" height="9"><path d="M0.5 0.5 L4.5 4.5 L8.5 0.5" stroke="#888" stroke-width="1.8" fill="none"/></svg>
<div class="t" style="left:710.30px;top:799.85px;font-size:14px;line-height:14px;font-weight:700;letter-spacing:0.211px;">19</div>
<div class="t" style="left:755.00px;top:800.27px;font-size:13.5px;line-height:13.5px;letter-spacing:-0.158px;">giờ</div>
<div class="a" style="left:781px;top:797px;width:52px;height:20px;background:#fff;border:1px solid #a9a9a9;border-bottom-color:#dadada;border-right-color:#dadada"></div>
<div class="a" style="left:817px;top:798px;width:15px;height:18px;background:#f0f0f0;border-left:1px solid #c4c4c4"></div>
<svg style="left:820.0px;top:804.0px" width="9" height="9"><path d="M0.5 0.5 L4.5 4.5 L8.5 0.5" stroke="#888" stroke-width="1.8" fill="none"/></svg>
<div class="t" style="left:795.10px;top:799.85px;font-size:14px;line-height:14px;font-weight:700;">0</div>
<div class="t" style="left:836.30px;top:800.27px;font-size:13.5px;line-height:13.5px;letter-spacing:0.480px;">phút</div>
<div class="a" style="left:871px;top:801px;width:2px;height:12px;background:#333"></div>
<div class="t" style="left:877.80px;top:800.27px;font-size:13.5px;line-height:13.5px;letter-spacing:0.288px;">Nội dung tái khám</div>
<div class="a" style="left:995px;top:797px;width:588px;height:20px;background:#fff;border:1px solid #a9a9a9;border-bottom-color:#dadada;border-right-color:#dadada"></div>
<div class="t" style="left:999.70px;top:799.85px;font-size:14px;line-height:14px;font-weight:700;letter-spacing:1.102px;">123213213</div>
<svg style="left:0;top:0" width="0" height="0"><defs>
<linearGradient id="rg" x1="0" x2="1" y1="0" y2="0"><stop offset="0" stop-color="#d7b08a"/><stop offset="0.45" stop-color="#f0dcc6"/><stop offset="1" stop-color="#d2a985"/></linearGradient>
<radialGradient id="cg" cx="45%" cy="40%" r="65%"><stop offset="0" stop-color="#f7f7ef"/><stop offset="0.7" stop-color="#e9e8dc"/><stop offset="1" stop-color="#c9c7b6"/></radialGradient>
<radialGradient id="cg2" cx="45%" cy="40%" r="65%"><stop offset="0" stop-color="#ecebe3"/><stop offset="0.7" stop-color="#d0cfc3"/><stop offset="1" stop-color="#a9a79a"/></radialGradient>
</defs></svg>
<div class="a" style="left:668px;top:233px;width:452px;height:88px;background:#fff;border:1px solid #d4d4d4;border-top-color:#a3a3a3;border-left-color:#a9a9a9"></div>
<div class="a" style="left:1101px;top:236px;width:17px;height:82px;background:#f0f0f0"></div>
<svg style="left:1105px;top:242px" width="9" height="9"><path d="M0.5 4.5 L4.5 0.5 L8.5 4.5" stroke="#c8c8c8" stroke-width="1.9" fill="none"/></svg>
<svg style="left:1105px;top:307px" width="9" height="9"><path d="M0.5 0.5 L4.5 4.5 L8.5 0.5" stroke="#c8c8c8" stroke-width="1.9" fill="none"/></svg>
<div class="a" style="left:668px;top:330px;width:452px;height:89px;background:#fff;border:1px solid #d4d4d4;border-top-color:#a3a3a3;border-left-color:#a9a9a9"></div>
<div class="a" style="left:1101px;top:333px;width:17px;height:83px;background:#f0f0f0"></div>
<svg style="left:1105px;top:339px" width="9" height="9"><path d="M0.5 4.5 L4.5 0.5 L8.5 4.5" stroke="#c8c8c8" stroke-width="1.9" fill="none"/></svg>
<svg style="left:1105px;top:405px" width="9" height="9"><path d="M0.5 0.5 L4.5 4.5 L8.5 0.5" stroke="#c8c8c8" stroke-width="1.9" fill="none"/></svg>
<div class="a" style="left:1129px;top:233px;width:454px;height:88px;background:#fff;border:1px solid #d4d4d4;border-top-color:#a3a3a3;border-left-color:#a9a9a9"></div>
<div class="a" style="left:1564px;top:236px;width:17px;height:82px;background:#f0f0f0"></div>
<svg style="left:1568px;top:242px" width="9" height="9"><path d="M0.5 4.5 L4.5 0.5 L8.5 4.5" stroke="#c8c8c8" stroke-width="1.9" fill="none"/></svg>
<svg style="left:1568px;top:307px" width="9" height="9"><path d="M0.5 0.5 L4.5 4.5 L8.5 0.5" stroke="#c8c8c8" stroke-width="1.9" fill="none"/></svg>
<div class="a" style="left:1129px;top:330px;width:454px;height:89px;background:#fff;border:1px solid #d4d4d4;border-top-color:#a3a3a3;border-left-color:#a9a9a9"></div>
<div class="a" style="left:1564px;top:333px;width:17px;height:83px;background:#f0f0f0"></div>
<svg style="left:1568px;top:339px" width="9" height="9"><path d="M0.5 4.5 L4.5 0.5 L8.5 4.5" stroke="#c8c8c8" stroke-width="1.9" fill="none"/></svg>
<svg style="left:1568px;top:405px" width="9" height="9"><path d="M0.5 0.5 L4.5 4.5 L8.5 0.5" stroke="#c8c8c8" stroke-width="1.9" fill="none"/></svg>
<div class="a" style="left:816px;top:237px;width:46px;height:72px;background:#b3d5f1"></div>
<svg style="left:683.8px;top:248px" width="24.7" height="37.0"><path d="M1.5 24.0 C0.7 11.0 0.7 3.3 3.0 0.5 C6.9 0 8.9 0.5 9.4 1 C10.4 6.6 12.4 11.0 13.1 14.1 C13.6 8.8 13.8 3.3 15.8 1.5 C20.3 1.5 22.7 11.0 23.2 24.0 Z" fill="url(#rg)"/><path d="M1.5 22.0 L22.2 22.0 C25.2 28.0 24.7 36.0 19.8 37.0 C16.1 37.0 14.3 34.0 12.4 34.0 C10.4 34.0 8.6 37.0 4.9 37.0 C-0.5 36.0 -0.5 28.0 1.5 22.0 Z" fill="url(#cg)"/></svg>
<div class="t" style="left:688.59px;top:292.69px;font-size:11px;line-height:11px;font-weight:700;color:#222;letter-spacing:0.575px;">18</div>
<svg style="left:732px;top:248px" width="25.0" height="37.0"><path d="M1.5 24.0 C0.8 11.0 0.8 3.3 3.0 0.5 C7.0 0 9.0 0.5 9.5 1 C10.5 6.6 12.5 11.0 13.2 14.1 C13.8 8.8 14.0 3.3 16.0 1.5 C20.5 1.5 23.0 11.0 23.5 24.0 Z" fill="url(#rg)"/><path d="M1.5 22.0 L22.5 22.0 C25.5 28.0 25.0 36.0 20.0 37.0 C16.2 37.0 14.5 34.0 12.5 34.0 C10.5 34.0 8.8 37.0 5.0 37.0 C-0.5 36.0 -0.5 28.0 1.5 22.0 Z" fill="url(#cg)"/></svg>
<div class="t" style="left:736.59px;top:292.69px;font-size:11px;line-height:11px;font-weight:700;color:#222;letter-spacing:0.575px;">17</div>
<svg style="left:778.3px;top:248px" width="27.5" height="37.0"><path d="M1.6 24.0 C0.8 11.0 0.8 3.3 3.3 0.5 C7.7 0 9.9 0.5 10.4 1 C11.5 6.6 13.8 11.0 14.6 14.1 C15.1 8.8 15.4 3.3 17.6 1.5 C22.5 1.5 25.3 11.0 25.8 24.0 Z" fill="url(#rg)"/><path d="M1.6 22.0 L24.8 22.0 C28.1 28.0 27.5 36.0 22.0 37.0 C17.9 37.0 15.9 34.0 13.8 34.0 C11.5 34.0 9.6 37.0 5.5 37.0 C-0.6 36.0 -0.6 28.0 1.6 22.0 Z" fill="url(#cg)"/></svg>
<div class="t" style="left:784.59px;top:292.69px;font-size:11px;line-height:11px;font-weight:700;color:#222;letter-spacing:0.575px;">16</div>
<svg style="left:835.8px;top:248px" width="18.2" height="37.0"><path d="M2.5 24.0 C2.5 9.9 6.6 0.3 10.0 0.3 C13.5 0.5 15.7 11.0 15.7 24.0 Z" fill="url(#rg)"/><path d="M2.2 22.0 L16.0 22.0 C18.2 26.5 18.6 36.0 9.1 37.0 C-0.4 36.0 0.0 26.5 2.2 22.0 Z" fill="url(#cg)"/></svg>
<div class="t" style="left:832.59px;top:292.69px;font-size:11px;line-height:11px;font-weight:700;color:#f00000;letter-spacing:0.575px;">15</div>
<svg style="left:880.6px;top:248px" width="14.7" height="37.0"><path d="M2.1 24.0 C2.1 9.9 5.3 0.3 8.1 0.3 C10.9 0.5 12.6 11.0 12.6 24.0 Z" fill="url(#rg)"/><path d="M1.8 22.0 L12.9 22.0 C14.7 26.5 15.0 36.0 7.3 37.0 C-0.3 36.0 0.0 26.5 1.8 22.0 Z" fill="url(#cg)"/></svg>
<div class="t" style="left:880.59px;top:292.69px;font-size:11px;line-height:11px;font-weight:700;color:#f00000;letter-spacing:0.575px;">14</div>
<svg style="left:927.6px;top:248px" width="17.1" height="37.0"><path d="M2.4 24.0 C2.4 9.9 6.2 0.3 9.4 0.3 C12.7 0.5 14.7 11.0 14.7 24.0 Z" fill="url(#rg)"/><path d="M2.1 22.0 L15.0 22.0 C17.1 26.5 17.4 36.0 8.6 37.0 C-0.3 36.0 0.0 26.5 2.1 22.0 Z" fill="url(#cg)"/></svg>
<div class="t" style="left:928.59px;top:292.69px;font-size:11px;line-height:11px;font-weight:700;color:#f00000;letter-spacing:0.575px;">13</div>
<svg style="left:978.2px;top:248px" width="12.7" height="37.0"><path d="M1.8 24.0 C1.8 9.9 4.6 0.3 7.0 0.3 C9.4 0.5 10.9 11.0 10.9 24.0 Z" fill="url(#rg)"/><path d="M1.5 22.0 L11.2 22.0 C12.7 26.5 13.0 36.0 6.3 37.0 C-0.3 36.0 0.0 26.5 1.5 22.0 Z" fill="url(#cg)"/></svg>
<div class="t" style="left:976.59px;top:292.69px;font-size:11px;line-height:11px;font-weight:700;color:#f00000;letter-spacing:0.575px;">12</div>
<svg style="left:1024.7px;top:248px" width="15.3" height="37.0"><path d="M2.1 24.0 C2.1 9.9 5.5 0.3 8.4 0.3 C11.3 0.5 13.2 11.0 13.2 24.0 Z" fill="url(#rg)"/><path d="M1.8 22.0 L13.5 22.0 C15.0 29.5 15.3 36.0 13.0 37.0 L2.3 37.0 C0.0 36.0 0.3 29.5 1.8 22.0 Z" fill="url(#cg)"/></svg>
<div class="t" style="left:1024.74px;top:292.69px;font-size:11px;line-height:11px;font-weight:700;color:#f00000;letter-spacing:0.880px;">11</div>
<svg style="left:683px;top:344px" width="24.0" height="38.0"><g transform="translate(0 38) scale(1 -1)"><path d="M1.9 27.0 C1.4 13.8 2.9 6.2 6.2 0.5 C8.2 0 8.6 5.0 8.6 7.5 C8.6 12.5 10.1 16.2 12.0 17.5 C13.9 15.0 14.9 8.8 16.8 0.8 C18.7 0 19.7 5.0 20.6 11.2 C21.6 17.5 22.1 22.5 22.1 27.0 Z" fill="url(#rg)"/><path d="M1.4 25.0 L21.6 25.0 C24.5 30.2 24.0 37.0 19.2 38.0 C15.6 38.0 13.9 35.0 12.0 35.0 C10.1 35.0 8.4 38.0 4.8 38.0 C-0.5 37.0 -0.5 30.2 1.4 25.0 Z" fill="url(#cg)"/></g></svg>
<div class="t" style="left:688.59px;top:389.19px;font-size:11px;line-height:11px;font-weight:700;color:#222;letter-spacing:0.575px;">48</div>
<svg style="left:730.6px;top:344px" width="24.1" height="38.0"><g transform="translate(0 38) scale(1 -1)"><path d="M1.9 27.0 C1.4 13.8 2.9 6.2 6.3 0.5 C8.2 0 8.7 5.0 8.7 7.5 C8.7 12.5 10.1 16.2 12.1 17.5 C14.0 15.0 14.9 8.8 16.9 0.8 C18.8 0 19.8 5.0 20.7 11.2 C21.7 17.5 22.2 22.5 22.2 27.0 Z" fill="url(#rg)"/><path d="M1.4 25.0 L21.7 25.0 C24.6 30.2 24.1 37.0 19.3 38.0 C15.7 38.0 14.0 35.0 12.1 35.0 C10.1 35.0 8.4 38.0 4.8 38.0 C-0.5 37.0 -0.5 30.2 1.4 25.0 Z" fill="url(#cg)"/></g></svg>
<div class="t" style="left:736.59px;top:389.19px;font-size:11px;line-height:11px;font-weight:700;color:#222;letter-spacing:0.575px;">47</div>
<svg style="left:780.6px;top:344px" width="22.0" height="38.0"><g transform="translate(0 38) scale(1 -1)"><path d="M1.8 27.0 C1.3 13.8 2.6 6.2 5.7 0.5 C7.5 0 7.9 5.0 7.9 7.5 C7.9 12.5 9.2 16.2 11.0 17.5 C12.8 15.0 13.6 8.8 15.4 0.8 C17.2 0 18.0 5.0 18.9 11.2 C19.8 17.5 20.2 22.5 20.2 27.0 Z" fill="url(#rg)"/><path d="M1.3 25.0 L19.8 25.0 C22.4 30.2 22.0 37.0 17.6 38.0 C14.3 38.0 12.8 35.0 11.0 35.0 C9.2 35.0 7.7 38.0 4.4 38.0 C-0.4 37.0 -0.4 30.2 1.3 25.0 Z" fill="url(#cg)"/></g></svg>
<div class="t" style="left:784.59px;top:389.19px;font-size:11px;line-height:11px;font-weight:700;color:#222;letter-spacing:0.575px;">46</div>
<svg style="left:831.4px;top:344px" width="13.6" height="38.0"><g transform="translate(0 38) scale(1 -1)"><path d="M1.9 27.0 C1.9 11.2 4.9 0.3 7.5 0.3 C10.1 0.5 11.7 12.5 11.7 27.0 Z" fill="url(#rg)"/><path d="M1.6 25.0 L12.0 25.0 C13.6 28.9 13.9 37.0 6.8 38.0 C-0.3 37.0 0.0 28.9 1.6 25.0 Z" fill="url(#cg)"/></g></svg>
<div class="t" style="left:832.59px;top:389.19px;font-size:11px;line-height:11px;font-weight:700;color:#222;letter-spacing:0.575px;">45</div>
<svg style="left:877.6px;top:344px" width="17.7" height="38.0"><g transform="translate(0 38) scale(1 -1)"><path d="M2.5 27.0 C2.5 11.2 6.4 0.3 9.7 0.3 C13.1 0.5 15.2 12.5 15.2 27.0 Z" fill="url(#rg)"/><path d="M2.1 25.0 L15.6 25.0 C17.7 28.9 18.1 37.0 8.8 38.0 C-0.4 37.0 0.0 28.9 2.1 25.0 Z" fill="url(#cg)"/></g></svg>
<div class="t" style="left:880.59px;top:389.19px;font-size:11px;line-height:11px;font-weight:700;color:#222;letter-spacing:0.575px;">44</div>
<svg style="left:928.2px;top:344px" width="14.8" height="38.0"><g transform="translate(0 38) scale(1 -1)"><path d="M2.1 27.0 C2.1 11.2 5.3 0.3 8.1 0.3 C11.0 0.5 12.7 12.5 12.7 27.0 Z" fill="url(#rg)"/><path d="M1.8 25.0 L13.0 25.0 C14.8 28.9 15.1 37.0 7.4 38.0 C-0.3 37.0 0.0 28.9 1.8 25.0 Z" fill="url(#cg2)"/></g></svg>
<div class="t" style="left:928.59px;top:389.19px;font-size:11px;line-height:11px;font-weight:700;color:#222;letter-spacing:0.575px;">43</div>
<svg style="left:976px;top:344px" width="15.0" height="38.0"><g transform="translate(0 38) scale(1 -1)"><path d="M2.1 27.0 C2.1 11.2 5.4 0.3 8.2 0.3 C11.1 0.5 12.9 12.5 12.9 27.0 Z" fill="url(#rg)"/><path d="M1.8 25.0 L13.2 25.0 C14.7 31.5 15.0 37.0 12.8 38.0 L2.2 38.0 C0.0 37.0 0.3 31.5 1.8 25.0 Z" fill="url(#cg)"/></g></svg>
<div class="t" style="left:976.59px;top:389.19px;font-size:11px;line-height:11px;font-weight:700;color:#222;letter-spacing:0.575px;">42</div>
<svg style="left:1024.7px;top:344px" width="12.7" height="38.0"><g transform="translate(0 38) scale(1 -1)"><path d="M1.8 27.0 C1.8 11.2 4.6 0.3 7.0 0.3 C9.4 0.5 10.9 12.5 10.9 27.0 Z" fill="url(#rg)"/><path d="M1.5 25.0 L11.2 25.0 C12.4 31.5 12.7 37.0 10.8 38.0 L1.9 38.0 C0.0 37.0 0.3 31.5 1.5 25.0 Z" fill="url(#cg)"/></g></svg>
<div class="t" style="left:1024.59px;top:389.19px;font-size:11px;line-height:11px;font-weight:700;color:#222;letter-spacing:0.575px;">41</div>
<svg style="left:1149.3px;top:248px" width="18.0" height="37.0"><g transform="translate(18.0 0) scale(-1 1)"><path d="M2.5 24.0 C2.5 9.9 6.5 0.3 9.9 0.3 C13.3 0.5 15.5 11.0 15.5 24.0 Z" fill="url(#rg)"/><path d="M2.2 22.0 L15.8 22.0 C17.6 29.5 18.0 36.0 15.3 37.0 L2.7 37.0 C0.0 36.0 0.4 29.5 2.2 22.0 Z" fill="url(#cg)"/></g></svg>
<div class="t" style="left:1149.59px;top:292.69px;font-size:11px;line-height:11px;font-weight:700;color:#222;letter-spacing:0.575px;">21</div>
<svg style="left:1194.2px;top:248px" width="17.9" height="37.0"><g transform="translate(17.899999999999864 0) scale(-1 1)"><path d="M2.5 24.0 C2.5 9.9 6.4 0.3 9.8 0.3 C13.2 0.5 15.4 11.0 15.4 24.0 Z" fill="url(#rg)"/><path d="M2.1 22.0 L15.8 22.0 C17.5 29.5 17.9 36.0 15.2 37.0 L2.7 37.0 C0.0 36.0 0.4 29.5 2.1 22.0 Z" fill="url(#cg)"/></g></svg>
<div class="t" style="left:1197.59px;top:292.69px;font-size:11px;line-height:11px;font-weight:700;color:#222;letter-spacing:0.575px;">22</div>
<svg style="left:1245px;top:248px" width="13.2" height="37.0"><g transform="translate(13.200000000000045 0) scale(-1 1)"><path d="M1.8 24.0 C1.8 9.9 4.8 0.3 7.3 0.3 C9.8 0.5 11.4 11.0 11.4 24.0 Z" fill="url(#rg)"/><path d="M1.6 22.0 L11.6 22.0 C13.2 26.5 13.5 36.0 6.6 37.0 C-0.3 36.0 0.0 26.5 1.6 22.0 Z" fill="url(#cg2)"/></g></svg>
<div class="t" style="left:1245.59px;top:292.69px;font-size:11px;line-height:11px;font-weight:700;color:#222;letter-spacing:0.575px;">23</div>
<svg style="left:1292.9px;top:248px" width="14.1" height="37.0"><g transform="translate(14.099999999999909 0) scale(-1 1)"><path d="M2.0 24.0 C2.0 9.9 5.1 0.3 7.8 0.3 C10.4 0.5 12.1 11.0 12.1 24.0 Z" fill="url(#rg)"/><path d="M1.7 22.0 L12.4 22.0 C14.1 26.5 14.4 36.0 7.0 37.0 C-0.3 36.0 0.0 26.5 1.7 22.0 Z" fill="url(#cg)"/></g></svg>
<div class="t" style="left:1293.59px;top:292.69px;font-size:11px;line-height:11px;font-weight:700;color:#222;letter-spacing:0.575px;">24</div>
<svg style="left:1340.8px;top:248px" width="14.0" height="37.0"><g transform="translate(14.0 0) scale(-1 1)"><path d="M2.0 24.0 C2.0 9.9 5.0 0.3 7.7 0.3 C10.4 0.5 12.0 11.0 12.0 24.0 Z" fill="url(#rg)"/><path d="M1.7 22.0 L12.3 22.0 C14.0 26.5 14.3 36.0 7.0 37.0 C-0.3 36.0 0.0 26.5 1.7 22.0 Z" fill="url(#cg)"/></g></svg>
<div class="t" style="left:1341.59px;top:292.69px;font-size:11px;line-height:11px;font-weight:700;color:#222;letter-spacing:0.575px;">25</div>
<svg style="left:1383.8px;top:248px" width="27.0" height="37.0"><g transform="translate(27.0 0) scale(-1 1)"><path d="M1.6 24.0 C0.8 11.0 0.8 3.3 3.2 0.5 C7.6 0 9.7 0.5 10.3 1 C11.3 6.6 13.5 11.0 14.3 14.1 C14.9 8.8 15.1 3.3 17.3 1.5 C22.1 1.5 24.8 11.0 25.4 24.0 Z" fill="url(#rg)"/><path d="M1.6 22.0 L24.3 22.0 C27.5 28.0 27.0 36.0 21.6 37.0 C17.6 37.0 15.7 34.0 13.5 34.0 C11.3 34.0 9.4 37.0 5.4 37.0 C-0.5 36.0 -0.5 28.0 1.6 22.0 Z" fill="url(#cg)"/></g></svg>
<div class="t" style="left:1389.59px;top:292.69px;font-size:11px;line-height:11px;font-weight:700;color:#222;letter-spacing:0.575px;">26</div>
<svg style="left:1431px;top:248px" width="26.4" height="37.0"><g transform="translate(26.40000000000009 0) scale(-1 1)"><path d="M1.6 24.0 C0.8 11.0 0.8 3.3 3.2 0.5 C7.4 0 9.5 0.5 10.0 1 C11.1 6.6 13.2 11.0 14.0 14.1 C14.5 8.8 14.8 3.3 16.9 1.5 C21.6 1.5 24.3 11.0 24.8 24.0 Z" fill="url(#rg)"/><path d="M1.6 22.0 L23.8 22.0 C26.9 28.0 26.4 36.0 21.1 37.0 C17.2 37.0 15.3 34.0 13.2 34.0 C11.1 34.0 9.2 37.0 5.3 37.0 C-0.5 36.0 -0.5 28.0 1.6 22.0 Z" fill="url(#cg)"/></g></svg>
<div class="t" style="left:1437.59px;top:292.69px;font-size:11px;line-height:11px;font-weight:700;color:#222;letter-spacing:0.575px;">27</div>
<svg style="left:1479px;top:248px" width="26.3" height="37.0"><g transform="translate(26.299999999999955 0) scale(-1 1)"><path d="M1.6 24.0 C0.8 11.0 0.8 3.3 3.2 0.5 C7.4 0 9.5 0.5 10.0 1 C11.0 6.6 13.1 11.0 13.9 14.1 C14.5 8.8 14.7 3.3 16.8 1.5 C21.6 1.5 24.2 11.0 24.7 24.0 Z" fill="url(#rg)"/><path d="M1.6 22.0 L23.7 22.0 C26.8 28.0 26.3 36.0 21.0 37.0 C17.1 37.0 15.3 34.0 13.1 34.0 C11.0 34.0 9.2 37.0 5.3 37.0 C-0.5 36.0 -0.5 28.0 1.6 22.0 Z" fill="url(#cg)"/></g></svg>
<div class="t" style="left:1485.59px;top:292.69px;font-size:11px;line-height:11px;font-weight:700;color:#222;letter-spacing:0.575px;">28</div>
<svg style="left:1150px;top:343px" width="12.8" height="38.0"><g transform="translate(12.799999999999955 0) scale(-1 1)"><g transform="translate(0 38) scale(1 -1)"><path d="M1.8 25.0 C1.8 10.3 4.6 0.3 7.0 0.3 C9.5 0.5 11.0 11.5 11.0 25.0 Z" fill="url(#rg)"/><path d="M1.5 23.0 L11.3 23.0 C12.5 30.5 12.8 37.0 10.9 38.0 L1.9 38.0 C0.0 37.0 0.3 30.5 1.5 23.0 Z" fill="url(#cg)"/></g></g></svg>
<div class="t" style="left:1149.59px;top:389.19px;font-size:11px;line-height:11px;font-weight:700;color:#222;letter-spacing:0.575px;">31</div>
<svg style="left:1197.8px;top:343px" width="13.4" height="38.0"><g transform="translate(13.400000000000091 0) scale(-1 1)"><g transform="translate(0 38) scale(1 -1)"><path d="M1.9 25.0 C1.9 10.3 4.8 0.3 7.4 0.3 C9.9 0.5 11.5 11.5 11.5 25.0 Z" fill="url(#rg)"/><path d="M1.6 23.0 L11.8 23.0 C13.1 30.5 13.4 37.0 11.4 38.0 L2.0 38.0 C0.0 37.0 0.3 30.5 1.6 23.0 Z" fill="url(#cg)"/></g></g></svg>
<div class="t" style="left:1197.59px;top:389.19px;font-size:11px;line-height:11px;font-weight:700;color:#222;letter-spacing:0.575px;">32</div>
<svg style="left:1245.6px;top:343px" width="12.6" height="38.0"><g transform="translate(12.600000000000136 0) scale(-1 1)"><g transform="translate(0 38) scale(1 -1)"><path d="M1.8 25.0 C1.8 10.3 4.5 0.3 6.9 0.3 C9.3 0.5 10.8 11.5 10.8 25.0 Z" fill="url(#rg)"/><path d="M1.5 23.0 L11.1 23.0 C12.6 27.5 12.9 37.0 6.3 38.0 C-0.3 37.0 0.0 27.5 1.5 23.0 Z" fill="url(#cg2)"/></g></g></svg>
<div class="t" style="left:1245.59px;top:389.19px;font-size:11px;line-height:11px;font-weight:700;color:#222;letter-spacing:0.575px;">33</div>
<svg style="left:1292.9px;top:343px" width="16.1" height="38.0"><g transform="translate(16.09999999999991 0) scale(-1 1)"><g transform="translate(0 38) scale(1 -1)"><path d="M2.3 25.0 C2.3 10.3 5.8 0.3 8.9 0.3 C11.9 0.5 13.8 11.5 13.8 25.0 Z" fill="url(#rg)"/><path d="M1.9 23.0 L14.2 23.0 C16.1 27.5 16.4 37.0 8.0 38.0 C-0.3 37.0 0.0 27.5 1.9 23.0 Z" fill="url(#cg)"/></g></g></svg>
<div class="t" style="left:1293.59px;top:389.19px;font-size:11px;line-height:11px;font-weight:700;color:#222;letter-spacing:0.575px;">34</div>
<svg style="left:1340.8px;top:343px" width="22.1" height="38.0"><g transform="translate(22.100000000000136 0) scale(-1 1)"><g transform="translate(0 38) scale(1 -1)"><path d="M3.1 25.0 C3.1 10.3 8.0 0.3 12.2 0.3 C16.4 0.5 19.0 11.5 19.0 25.0 Z" fill="url(#rg)"/><path d="M2.7 23.0 L19.4 23.0 C22.1 27.5 22.5 37.0 11.1 38.0 C-0.4 37.0 0.0 27.5 2.7 23.0 Z" fill="url(#cg)"/></g></g></svg>
<div class="t" style="left:1341.59px;top:389.19px;font-size:11px;line-height:11px;font-weight:700;color:#222;letter-spacing:0.575px;">35</div>
<svg style="left:1384.7px;top:343px" width="24.0" height="38.0"><g transform="translate(24.0 0) scale(-1 1)"><g transform="translate(0 38) scale(1 -1)"><path d="M1.9 25.0 C1.4 12.7 2.9 5.8 6.2 0.5 C8.2 0 8.6 4.6 8.6 6.9 C8.6 11.5 10.1 15.0 12.0 16.1 C13.9 13.8 14.9 8.0 16.8 0.8 C18.7 0 19.7 4.6 20.6 10.3 C21.6 16.1 22.1 20.7 22.1 25.0 Z" fill="url(#rg)"/><path d="M1.4 23.0 L21.6 23.0 C24.5 29.0 24.0 37.0 19.2 38.0 C15.6 38.0 13.9 35.0 12.0 35.0 C10.1 35.0 8.4 38.0 4.8 38.0 C-0.5 37.0 -0.5 29.0 1.4 23.0 Z" fill="url(#cg)"/></g></g></svg>
<div class="t" style="left:1389.59px;top:389.19px;font-size:11px;line-height:11px;font-weight:700;color:#222;letter-spacing:0.575px;">36</div>
<svg style="left:1433.5px;top:343px" width="24.5" height="38.0"><g transform="translate(24.5 0) scale(-1 1)"><g transform="translate(0 38) scale(1 -1)"><path d="M2.0 25.0 C1.5 12.7 2.9 5.8 6.4 0.5 C8.3 0 8.8 4.6 8.8 6.9 C8.8 11.5 10.3 15.0 12.2 16.1 C14.2 13.8 15.2 8.0 17.1 0.8 C19.1 0 20.1 4.6 21.1 10.3 C22.1 16.1 22.5 20.7 22.5 25.0 Z" fill="url(#rg)"/><path d="M1.5 23.0 L22.1 23.0 C25.0 29.0 24.5 37.0 19.6 38.0 C15.9 38.0 14.2 35.0 12.2 35.0 C10.3 35.0 8.6 38.0 4.9 38.0 C-0.5 37.0 -0.5 29.0 1.5 23.0 Z" fill="url(#cg)"/></g></g></svg>
<div class="t" style="left:1437.59px;top:389.19px;font-size:11px;line-height:11px;font-weight:700;color:#222;letter-spacing:0.575px;">37</div>
<svg style="left:1482px;top:343px" width="23.9" height="38.0"><g transform="translate(23.90000000000009 0) scale(-1 1)"><g transform="translate(0 38) scale(1 -1)"><path d="M1.9 25.0 C1.4 12.7 2.9 5.8 6.2 0.5 C8.1 0 8.6 4.6 8.6 6.9 C8.6 11.5 10.0 15.0 12.0 16.1 C13.9 13.8 14.8 8.0 16.7 0.8 C18.6 0 19.6 4.6 20.6 10.3 C21.5 16.1 22.0 20.7 22.0 25.0 Z" fill="url(#rg)"/><path d="M1.4 23.0 L21.5 23.0 C24.4 29.0 23.9 37.0 19.1 38.0 C15.5 38.0 13.9 35.0 12.0 35.0 C10.0 35.0 8.4 38.0 4.8 38.0 C-0.5 37.0 -0.5 29.0 1.4 23.0 Z" fill="url(#cg)"/></g></g></svg>
<div class="t" style="left:1485.59px;top:389.19px;font-size:11px;line-height:11px;font-weight:700;color:#222;letter-spacing:0.575px;">38</div>
<svg style="left:25px;top:37px" width="15" height="15" viewBox="0 0 15 15"><defs><linearGradient id="sk1" x1="0" y1="0" x2="1" y2="0"><stop offset="0" stop-color="#20e060"/><stop offset="0.35" stop-color="#40e0e0"/><stop offset="0.65" stop-color="#a050f0"/><stop offset="1" stop-color="#f02080"/></linearGradient>
<linearGradient id="sk2" x1="0" y1="0" x2="0" y2="1"><stop offset="0" stop-color="#f0e040" stop-opacity="0.9"/><stop offset="0.5" stop-color="#fff" stop-opacity="0.1"/><stop offset="1" stop-color="#4060ff" stop-opacity="0.6"/></linearGradient>
<radialGradient id="sk3" cx="50%" cy="50%" r="50%"><stop offset="0" stop-color="#fff"/><stop offset="1" stop-color="#fff" stop-opacity="0"/></radialGradient></defs>
<circle cx="7.5" cy="7.5" r="7" fill="url(#sk1)"/><circle cx="7.5" cy="7.5" r="7" fill="url(#sk2)"/><circle cx="7.5" cy="7.5" r="4.5" fill="url(#sk3)"/></svg>
<svg style="left:90px;top:35px" width="14" height="16" viewBox="0 0 14 16"><defs><linearGradient id="us" x1="0" x2="1"><stop offset="0" stop-color="#5a6470"/><stop offset="1" stop-color="#15181c"/></linearGradient><radialGradient id="uf" cx="35%" cy="35%" r="70%"><stop offset="0" stop-color="#fff4dc"/><stop offset="1" stop-color="#d89040"/></radialGradient></defs>
<path d="M1 15.5 C0.5 11 2.5 9 7 9 C11.5 9 13.5 11 13 15.5 Z" fill="url(#us)"/><path d="M5.3 9 L7 12 L8.7 9 Z" fill="#fff"/><path d="M6.3 9.8 L7.7 9.8 L8 14.5 L7 15.5 L6 14.5 Z" fill="#b02020"/>
<ellipse cx="7" cy="5.6" rx="2.9" ry="3.6" fill="url(#uf)"/><path d="M3.4 6.5 C2.6 2 5 0.6 7.3 0.8 C10 1 11.4 3 10.6 6.5 C10 4 9 3.2 7.4 3.4 C5.6 3.6 4.2 4.4 3.4 6.5 Z" fill="#6e3c16"/></svg>
<svg style="left:255px;top:36px" width="17" height="16" viewBox="0 0 17 16"><rect x="0.5" y="0.5" width="13" height="13" fill="#e8eef8" stroke="#5a7cb8"/><rect x="1" y="1" width="12" height="4.5" fill="#8cb0e0"/><path d="M2.5 2.3 h4 L4.5 4.3 Z" fill="#2a5aa8"/>
<circle cx="12" cy="11.5" r="3.6" fill="#8894a8" stroke="#505a70" stroke-width="1" stroke-dasharray="1.6 0.9"/><circle cx="12" cy="11.5" r="1.4" fill="#fff"/></svg>
<svg style="left:351px;top:37px" width="14" height="14" viewBox="0 0 14 14"><rect x="0.5" y="0.5" width="8" height="8" fill="#fff" stroke="#6a7ab0"/><rect x="2" y="2" width="2" height="2" fill="#e8c020"/><rect x="5" y="2" width="2" height="2" fill="#f05030"/><rect x="2" y="5" width="2" height="2" fill="#f08020"/>
<rect x="5.5" y="5.5" width="8" height="8" fill="#fff" stroke="#6a7ab0"/><rect x="7" y="7" width="2" height="2" fill="#e8c020"/><rect x="10" y="7" width="2" height="2" fill="#f05030"/><rect x="7" y="10" width="2" height="2" fill="#f08020"/><rect x="10" y="10" width="2" height="2" fill="#e04060"/></svg>
<svg style="left:443px;top:36px" width="12" height="15" viewBox="0 0 12 15"><rect x="0.5" y="1.5" width="11" height="13" rx="1" fill="#e8b820" stroke="#a07010"/><rect x="2" y="3" width="8" height="10" fill="#fff"/><rect x="3.5" y="0.5" width="5" height="2.5" fill="#7ab0e8"/><path d="M3.5 7 h5 M3.5 9.5 h5" stroke="#4a80c0" stroke-width="1"/></svg>
<svg style="left:520px;top:36px" width="16" height="15" viewBox="0 0 16 15"><path d="M1 3.5 L6 1 L11 3 L11 10 L6 12.5 L1 10 Z" fill="#e8b450" stroke="#a87020" stroke-width="0.6"/><path d="M1 3.5 L6 5.5 L11 3 M6 5.5 V12.5" stroke="#b88030" stroke-width="0.6" fill="none"/><path d="M1 3.5 L6 1 L11 3 L6 5.5 Z" fill="#f6d890"/>
<path d="M8 7.5 L11.5 6 L15 7.5 L15 12.5 L11.5 14.5 L8 12.5 Z" fill="#e0a840" stroke="#a87020" stroke-width="0.6"/><path d="M8 7.5 L11.5 9 L15 7.5 L11.5 6 Z" fill="#f6d890"/></svg>
<svg style="left:654px;top:36px" width="16" height="15" viewBox="0 0 16 15"><ellipse cx="3.5" cy="11" rx="3.5" ry="3" fill="#7ab840"/><ellipse cx="12.5" cy="11" rx="3.5" ry="3" fill="#7ab840"/><circle cx="3.5" cy="5" r="2.5" fill="#d8a070"/><circle cx="12.5" cy="5" r="2.5" fill="#d8a070"/>
<ellipse cx="8" cy="13" rx="4" ry="2.8" fill="#8ac850"/><circle cx="8" cy="7.5" r="2.8" fill="#e0a878"/><path d="M5.3 6.5 C5.5 4 10.5 4 10.7 6.5" fill="#905830"/></svg>
<svg style="left:782px;top:37px" width="15" height="14" viewBox="0 0 15 14"><circle cx="5" cy="5" r="3.8" fill="#dde3ef" stroke="#5a6a98" stroke-width="1.1" stroke-dasharray="1.5 0.9"/><circle cx="5" cy="5" r="1.3" fill="none" stroke="#5a6a98" stroke-width="0.9"/>
<circle cx="11" cy="10.5" r="3.2" fill="#dde3ef" stroke="#5a6a98" stroke-width="1.1" stroke-dasharray="1.3 0.8"/><circle cx="11" cy="10.5" r="1.1" fill="none" stroke="#5a6a98" stroke-width="0.9"/></svg>
<svg style="left:868px;top:36px" width="12" height="15" viewBox="0 0 12 15"><defs><linearGradient id="dbg" x1="0" x2="1"><stop offset="0" stop-color="#c87020"/><stop offset="0.4" stop-color="#f8d890"/><stop offset="1" stop-color="#b86010"/></linearGradient></defs>
<rect x="0.5" y="1" width="11" height="13.5" rx="2" fill="url(#dbg)"/><path d="M0.8 4.5 h10.4 M0.8 8 h10.4 M0.8 11.5 h10.4" stroke="#fff4d0" stroke-width="0.8"/></svg>
<svg style="left:945px;top:37px" width="14" height="14" viewBox="0 0 14 14"><path d="M0.5 14 C0.5 10 3 8.5 7 8.5 C11 8.5 13.5 10 13.5 14 Z" fill="#6fa898"/><ellipse cx="7" cy="4.5" rx="3.4" ry="4.2" fill="#6fa898"/><path d="M5 8.8 L7 11 L9 8.8" fill="#fff" stroke="#fff" stroke-width="0.6"/></svg>
<svg style="left:1020px;top:37px" width="14" height="14" viewBox="0 0 14 14"><path d="M4.8 0.8 h4.4 l1.3 1.8 v2.2 l-1.6 1.8 v1 M4.8 0.8 l-1.3 1.8 v2.2 l1.6 1.8 v6.5 l1.2 1.2 h0.8 l1.2 -1.2 v-1.5 l-0.8 -0.8 l0.8 -0.8 l-0.8 -0.8 l0.8 -0.8" fill="none" stroke="#2a3aa8" stroke-width="1.1"/><path d="M6.2 2.9 h1.6" stroke="#2a3aa8" stroke-width="1.1"/>
<path d="M0.5 7.5 L3 9.5 M13.5 8.5 L11 10" stroke="#8a9ad8" stroke-width="1.4"/></svg>
<svg style="left:1130px;top:37px" width="14" height="14" viewBox="0 0 14 14"><rect x="0" y="0" width="14" height="14" fill="#e05a3a"/><path d="M3.5 3.5 L10.5 10.5 M10.5 3.5 L3.5 10.5" stroke="#fff" stroke-width="2.3"/></svg>
</body></html>
